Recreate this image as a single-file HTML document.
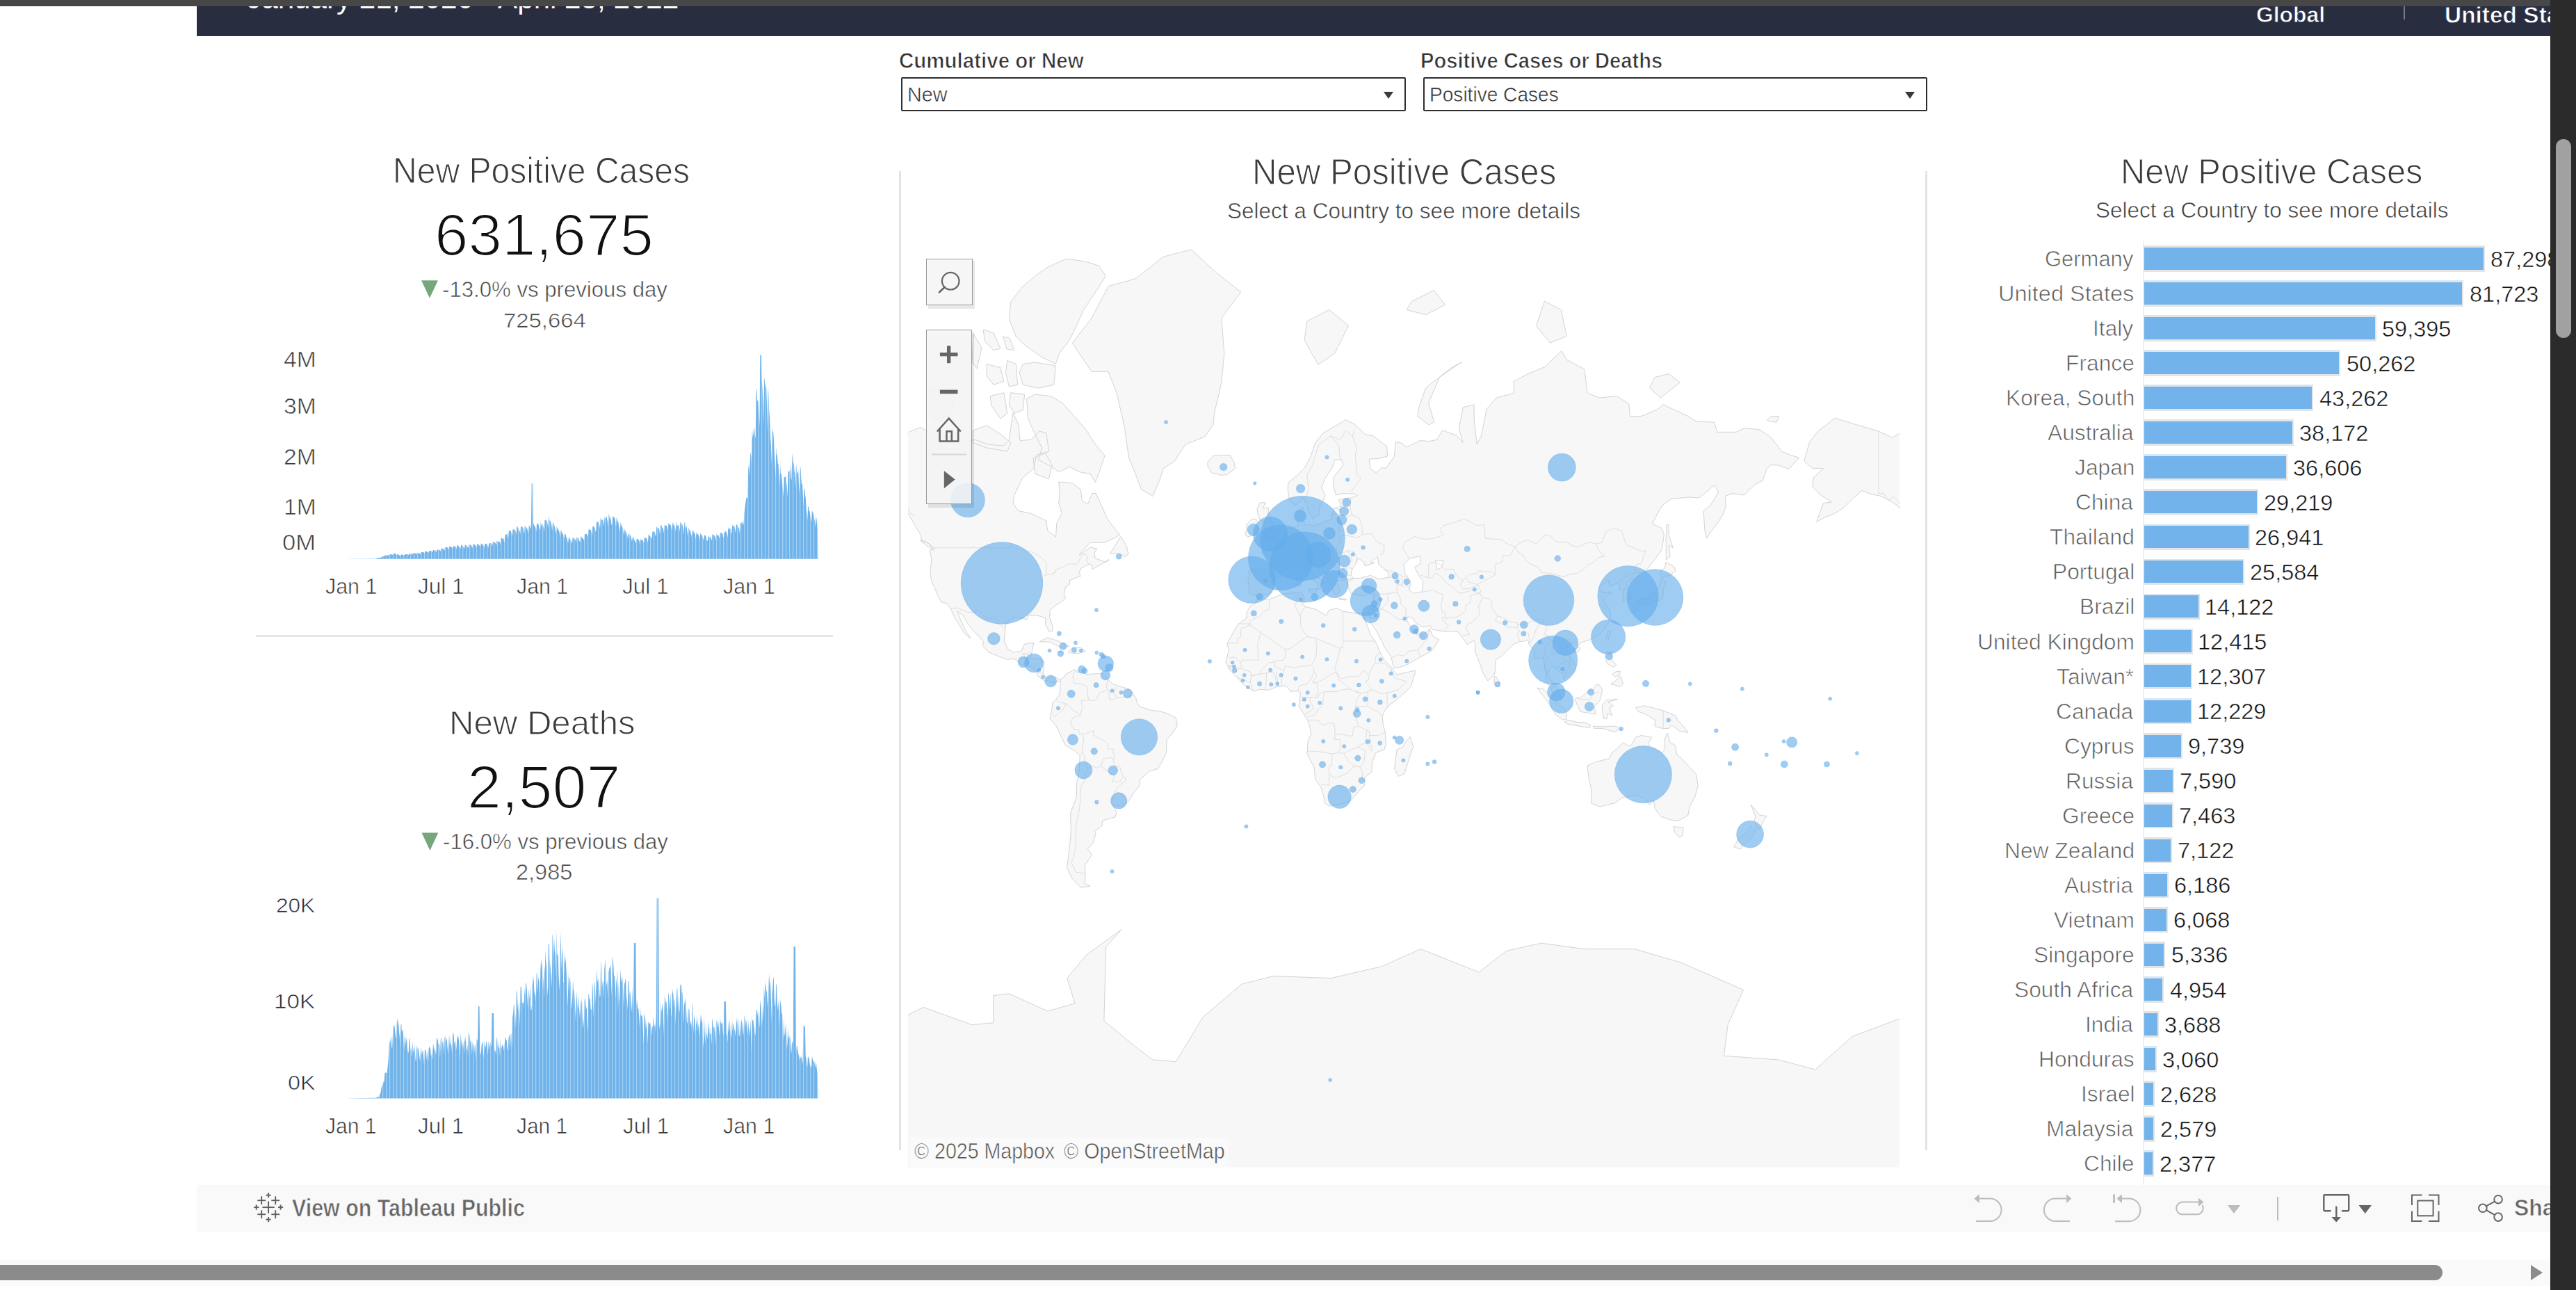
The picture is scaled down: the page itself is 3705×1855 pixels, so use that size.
<!DOCTYPE html><html><head><meta charset="utf-8"><style>
html,body{margin:0;padding:0;width:3705px;height:1855px;overflow:hidden;background:#fff;}
body{position:relative;font-family:'Liberation Sans', sans-serif;}
.t{position:absolute;white-space:nowrap;transform-origin:0 0;}
#topbar{position:absolute;z-index:5;left:0;top:0;width:3668px;height:9px;background:#474747;}
#hdr{position:absolute;left:283px;top:9px;width:3385px;height:43.4px;background:#292d40;overflow:hidden;}
#hsep{position:absolute;left:3456.7px;top:9px;width:2px;height:18.5px;background:#7a7a7a;}
#vsb{position:absolute;z-index:6;left:3668px;top:0;width:37px;height:1855px;background:#2b2b2b;}
#vth{position:absolute;left:8px;top:200px;width:22px;height:286px;border-radius:11px;background:#a1a1a1;}
#tb{position:absolute;left:283px;top:1703.5px;width:3385px;height:68px;background:#f9f9f9;}
#hsb{position:absolute;z-index:5;left:0;top:1811px;width:3668px;height:38px;background:#fafafa;}
#hth{position:absolute;left:-12px;top:8px;width:3525px;height:22px;border-radius:11px;background:#8b8b8b;}
#harr{position:absolute;left:3640px;top:8px;width:0;height:0;border-top:11px solid transparent;border-bottom:11px solid transparent;border-left:17px solid #8b8b8b;}
.dd{position:absolute;top:111.1px;width:726px;height:48.7px;border:2.2px solid #2e2e2e;border-radius:2px;box-sizing:border-box;background:#fff;}
.ddtri{position:absolute;top:132.1px;width:0;height:0;border-left:7.5px solid transparent;border-right:7.5px solid transparent;border-top:10.2px solid #3a3a3a;}
#sep1{position:absolute;left:367.7px;top:913px;width:830px;height:3px;background:#e6e6e6;}
.vl{position:absolute;top:245.8px;width:3px;height:1408px;background:#e3e3e3;}
#axisr{position:absolute;left:3081.5px;top:346.5px;width:2px;height:1357px;background:#f0f0f0;}
.bo{position:absolute;left:3082.5px;height:37.5px;background:#e4e4e4;border-top:1px solid #d4e6f5;box-sizing:border-box;}
.bf{position:absolute;left:3084px;height:32px;background:#71b3ea;}
</style></head><body><div id="topbar"></div><div id="hdr"></div><div id="hsep"></div><div id="vsb"><div id="vth"></div></div><div id="tb"></div><div id="hsb"><div id="hth"></div><div id="harr"></div></div><div class="dd" style="left:1296px"></div><div class="dd" style="left:2047px;width:725px"></div><div class="ddtri" style="left:1989.6px"></div><div class="ddtri" style="left:2739.6px"></div><div id="sep1"></div><div class="vl" style="left:1292.5px"></div><div class="vl" style="left:2769px"></div><div id="axisr"></div><svg style="position:absolute;left:0;top:0" width="1300" height="1700" viewBox="0 0 1300 1700"><defs><pattern id="stp" x="555.2" y="0" width="5.0" height="20" patternUnits="userSpaceOnUse"><rect x="0" y="0" width="5" height="20" fill="#6fb3ea"/><rect x="0" y="0" width="0.75" height="20" fill="#c9e3f8"/></pattern></defs><path d="M502.00 803.80L502.41 803.50L503.23 803.51L504.05 803.51L504.87 803.52L505.69 803.52L506.51 803.53L507.33 803.56L508.15 803.48L508.97 803.48L509.79 803.48L510.61 803.48L511.42 803.49L512.24 803.51L513.06 803.54L513.88 803.45L514.70 803.45L515.52 803.44L516.34 803.45L517.16 803.46L517.98 803.48L518.80 803.51L519.62 803.41L520.44 803.44L521.26 803.43L522.08 803.47L522.90 803.46L523.72 803.46L524.54 803.50L525.36 803.38L526.18 803.39L527.00 803.43L527.82 803.41L528.64 803.40L529.46 803.46L530.27 803.48L531.09 803.36L531.91 803.36L532.73 803.39L533.55 803.37L534.37 803.37L535.19 803.43L536.01 803.46L536.83 803.32L537.65 803.34L538.47 803.33L539.29 803.34L540.11 803.31L540.93 803.13L541.75 803.01L542.57 802.48L543.39 802.20L544.21 802.12L545.03 802.02L545.85 801.91L546.67 801.99L547.49 802.12L548.31 801.30L549.12 800.78L549.94 800.60L550.76 800.07L551.58 799.67L552.40 799.68L553.22 800.07L554.04 798.62L554.86 798.30L555.68 798.31L556.50 798.19L557.32 798.29L558.14 798.86L558.96 798.98L559.78 797.44L560.60 797.08L561.42 797.22L562.24 797.17L563.06 796.97L563.88 797.62L564.70 798.06L565.52 796.33L566.34 795.75L567.16 795.88L567.97 796.01L568.79 796.07L569.61 797.53L570.43 798.39L571.25 796.71L572.07 797.12L572.89 797.57L573.71 797.84L574.53 798.40L575.35 798.78L576.17 799.39L576.99 797.54L577.81 797.50L578.63 797.57L579.45 797.85L580.27 798.25L581.09 798.03L581.91 798.61L582.73 797.17L583.55 796.81L584.37 796.96L585.19 797.07L586.01 796.86L586.82 797.54L587.64 798.36L588.46 796.02L589.28 796.26L590.10 796.56L590.92 796.70L591.74 796.12L592.56 796.90L593.38 797.47L594.20 795.15L595.02 795.50L595.84 795.21L596.66 795.28L597.48 795.65L598.30 796.17L599.12 797.19L599.94 794.59L600.76 795.07L601.58 795.15L602.40 795.67L603.22 794.90L604.04 796.40L604.86 796.62L605.67 794.10L606.49 793.83L607.31 794.03L608.13 793.95L608.95 793.95L609.77 794.78L610.59 795.71L611.41 792.66L612.23 792.69L613.05 793.16L613.87 792.97L614.69 793.42L615.51 793.74L616.33 795.33L617.15 792.21L617.97 792.54L618.79 791.80L619.61 791.92L620.43 792.32L621.25 793.16L622.07 794.23L622.89 790.87L623.71 790.89L624.52 791.57L625.34 791.47L626.16 791.44L626.98 792.65L627.80 793.79L628.62 789.75L629.44 790.75L630.26 790.55L631.08 789.98L631.90 791.49L632.72 791.08L633.54 792.98L634.36 788.42L635.18 788.80L636.00 788.57L636.82 789.01L637.64 789.08L638.46 791.08L639.28 791.32L640.10 787.03L640.92 786.74L641.74 786.82L642.55 786.98L643.37 787.06L644.19 788.43L645.01 791.12L645.83 785.65L646.65 785.56L647.47 786.27L648.29 785.93L649.11 786.72L649.93 787.33L650.75 788.89L651.57 784.41L652.39 786.70L653.21 785.07L654.03 785.68L654.85 785.70L655.67 786.65L656.49 789.79L657.31 783.41L658.13 784.08L658.95 785.21L659.77 785.31L660.59 787.34L661.40 786.42L662.22 789.68L663.04 784.16L663.86 783.56L664.68 784.33L665.50 785.21L666.32 786.31L667.14 787.98L667.96 789.10L668.78 783.17L669.60 783.86L670.42 783.58L671.24 785.18L672.06 786.09L672.88 786.76L673.70 788.20L674.52 782.85L675.34 783.35L676.16 783.26L676.98 783.94L677.80 783.86L678.62 786.48L679.44 787.88L680.25 781.95L681.07 782.45L681.89 782.51L682.71 783.12L683.53 783.96L684.35 785.21L685.17 787.20L685.99 781.89L686.81 782.12L687.63 783.33L688.45 782.93L689.27 784.00L690.09 785.31L690.91 787.16L691.73 781.32L692.55 781.74L693.37 783.94L694.19 782.59L695.01 782.84L695.83 785.75L696.65 787.33L697.47 781.42L698.29 782.32L699.10 781.58L699.92 782.10L700.74 782.41L701.56 785.50L702.38 787.72L703.20 780.42L704.02 781.81L704.84 780.99L705.66 780.97L706.48 781.24L707.30 783.04L708.12 785.10L708.94 778.56L709.76 779.50L710.58 779.72L711.40 779.78L712.22 780.59L713.04 781.56L713.86 784.42L714.68 777.12L715.50 778.17L716.32 777.93L717.14 779.54L717.95 778.69L718.77 779.27L719.59 783.29L720.41 773.53L721.23 773.37L722.05 774.50L722.87 774.40L723.69 773.86L724.51 775.38L725.33 780.92L726.15 773.19L726.97 768.62L727.79 768.50L728.61 768.60L729.43 766.98L730.25 772.37L731.07 773.66L731.89 763.08L732.71 762.66L733.53 762.78L734.35 763.68L735.17 765.03L735.99 767.20L736.80 770.86L737.62 759.97L738.44 762.07L739.26 759.97L740.08 761.92L740.90 762.72L741.72 764.26L742.54 769.80L743.36 755.92L744.18 757.08L745.00 759.15L745.82 759.72L746.64 763.07L747.46 763.51L748.28 768.75L749.10 755.27L749.92 756.92L750.74 758.30L751.56 757.85L752.38 759.08L753.20 765.27L754.02 767.15L754.84 754.97L755.65 757.38L756.47 756.67L757.29 760.21L758.11 759.19L758.93 763.35L759.75 767.26L760.57 753.67L761.39 757.63L762.21 755.03L763.03 759.74L763.85 759.83L764.67 695.10L765.49 695.10L766.31 695.10L767.13 753.51L767.95 753.91L768.77 756.76L769.59 757.25L770.41 759.47L771.23 765.29L772.05 752.74L772.87 754.14L773.68 752.12L774.50 754.22L775.32 757.29L776.14 759.63L776.96 763.56L777.78 750.51L778.60 754.43L779.42 757.10L780.24 752.72L781.06 755.80L781.88 758.48L782.70 764.76L783.52 747.89L784.34 747.35L785.16 748.84L785.98 747.68L786.80 750.09L787.62 753.44L788.44 759.58L789.26 741.60L790.08 748.73L790.90 748.18L791.72 748.91L792.53 752.09L793.35 755.97L794.17 763.33L794.99 750.70L795.81 751.56L796.63 753.53L797.45 756.13L798.27 758.99L799.09 763.27L799.91 767.60L800.73 755.45L801.55 759.71L802.37 760.07L803.19 762.64L804.01 762.43L804.83 767.07L805.65 774.16L806.47 763.41L807.29 762.47L808.11 765.64L808.93 767.14L809.75 768.27L810.57 770.80L811.38 776.00L812.20 766.45L813.02 768.05L813.84 769.10L814.66 773.21L815.48 772.46L816.30 777.51L817.12 781.18L817.94 772.41L818.76 773.22L819.58 775.71L820.40 775.78L821.22 776.91L822.04 779.32L822.86 782.05L823.68 773.00L824.50 773.45L825.32 773.59L826.14 776.12L826.96 774.11L827.78 776.69L828.60 780.64L829.42 772.24L830.23 773.83L831.05 773.10L831.87 773.56L832.69 776.45L833.51 778.25L834.33 779.88L835.15 771.71L835.97 771.03L836.79 772.64L837.61 772.63L838.43 775.01L839.25 774.84L840.07 778.29L840.89 766.92L841.71 768.47L842.53 768.21L843.35 767.87L844.17 767.65L844.99 770.50L845.81 772.70L846.63 761.05L847.45 760.99L848.27 761.45L849.08 762.50L849.90 762.06L850.72 765.13L851.54 770.35L852.36 756.94L853.18 756.39L854.00 756.98L854.82 759.79L855.64 757.80L856.46 763.78L857.28 764.62L858.10 749.68L858.92 750.88L859.74 750.58L860.56 749.10L861.38 752.02L862.20 755.61L863.02 759.79L863.84 744.33L864.66 746.42L865.48 748.10L866.30 747.44L867.12 746.82L867.93 751.66L868.75 756.71L869.57 742.45L870.39 747.27L871.21 744.30L872.03 743.26L872.85 743.48L873.67 749.80L874.49 757.00L875.31 738.65L876.13 740.04L876.95 746.57L877.77 742.31L878.59 747.61L879.41 753.67L880.23 755.59L881.05 743.91L881.87 742.58L882.69 743.23L883.51 744.35L884.33 745.22L885.15 751.16L885.97 758.09L886.78 743.16L887.60 746.49L888.42 750.16L889.24 750.10L890.06 756.34L890.88 758.39L891.70 765.18L892.52 751.26L893.34 753.50L894.16 756.13L894.98 758.12L895.80 759.00L896.62 764.37L897.44 770.73L898.26 758.78L899.08 765.50L899.90 762.06L900.72 765.80L901.54 768.09L902.36 770.01L903.18 775.56L904.00 767.03L904.82 766.49L905.63 769.64L906.45 769.52L907.27 770.72L908.09 774.50L908.91 778.73L909.73 773.30L910.55 771.40L911.37 772.41L912.19 775.64L913.01 777.56L913.83 778.91L914.65 781.63L915.47 774.19L916.29 774.79L917.11 775.20L917.93 775.62L918.75 776.25L919.57 778.36L920.39 782.69L921.21 774.37L922.03 776.68L922.85 776.83L923.66 776.89L924.48 776.29L925.30 779.04L926.12 780.93L926.94 773.10L927.76 773.68L928.58 773.57L929.40 773.09L930.22 774.84L931.04 776.83L931.86 780.63L932.68 769.23L933.50 768.10L934.32 770.66L935.14 770.99L935.96 772.09L936.78 773.25L937.60 775.19L938.42 764.27L939.24 764.25L940.06 763.52L940.88 765.51L941.70 764.16L942.51 769.34L943.33 771.68L944.15 759.05L944.97 756.81L945.79 759.16L946.61 759.25L947.43 759.49L948.25 761.75L949.07 768.54L949.89 754.24L950.71 756.56L951.53 754.95L952.35 758.38L953.17 758.93L953.99 761.40L954.81 766.69L955.63 755.32L956.45 754.70L957.27 756.38L958.09 755.88L958.91 755.33L959.73 758.92L960.55 764.46L961.36 751.73L962.18 752.98L963.00 754.20L963.82 754.74L964.64 754.72L965.46 757.95L966.28 763.58L967.10 753.90L967.92 750.58L968.74 756.14L969.56 753.31L970.38 758.13L971.20 759.35L972.02 765.03L972.84 749.10L973.66 755.39L974.48 755.95L975.30 755.50L976.12 753.70L976.94 758.48L977.76 764.65L978.58 749.93L979.40 752.67L980.21 751.93L981.03 754.10L981.85 755.53L982.67 759.87L983.49 768.78L984.31 751.90L985.13 750.54L985.95 760.45L986.77 755.66L987.59 757.74L988.41 765.04L989.23 770.60L990.05 757.67L990.87 759.96L991.69 762.90L992.51 762.23L993.33 765.96L994.15 768.21L994.97 772.49L995.79 764.46L996.61 762.42L997.43 763.48L998.25 767.77L999.06 765.33L999.88 769.51L1000.70 775.56L1001.52 764.19L1002.34 768.65L1003.16 768.26L1003.98 766.73L1004.80 770.40L1005.62 771.54L1006.44 776.75L1007.26 766.41L1008.08 768.44L1008.90 769.44L1009.72 769.86L1010.54 772.91L1011.36 774.31L1012.18 777.32L1013.00 768.90L1013.82 770.07L1014.64 770.31L1015.46 770.94L1016.28 775.72L1017.10 777.00L1017.91 778.22L1018.73 769.51L1019.55 772.31L1020.37 773.08L1021.19 771.14L1022.01 772.45L1022.83 774.93L1023.65 777.62L1024.47 767.97L1025.29 769.03L1026.11 768.60L1026.93 769.58L1027.75 770.43L1028.57 772.25L1029.39 777.35L1030.21 767.12L1031.03 768.96L1031.85 770.10L1032.67 770.32L1033.49 768.92L1034.31 772.56L1035.13 774.87L1035.95 765.32L1036.76 766.79L1037.58 766.30L1038.40 766.63L1039.22 767.52L1040.04 771.96L1040.86 773.86L1041.68 763.89L1042.50 766.54L1043.32 762.76L1044.14 766.92L1044.96 763.24L1045.78 767.33L1046.60 773.50L1047.42 757.71L1048.24 761.98L1049.06 758.40L1049.88 761.16L1050.70 759.09L1051.52 766.80L1052.34 767.71L1053.16 754.26L1053.98 757.28L1054.79 756.00L1055.61 755.63L1056.43 757.13L1057.25 761.85L1058.07 766.77L1058.89 753.06L1059.71 754.74L1060.53 754.62L1061.35 756.95L1062.17 758.79L1062.99 759.88L1063.81 767.34L1064.63 752.81L1065.45 751.04L1066.27 750.82L1067.09 755.08L1067.91 749.35L1068.73 752.03L1069.55 755.05L1070.37 737.32L1071.19 732.37L1072.01 725.57L1072.83 718.97L1073.64 715.12L1074.46 716.68L1075.28 715.20L1076.10 674.50L1076.92 668.38L1077.74 683.67L1078.56 667.09L1079.38 650.64L1080.20 654.37L1081.02 667.38L1081.84 616.75L1082.66 629.20L1083.48 625.00L1084.30 614.63L1085.12 618.11L1085.94 626.18L1086.76 630.29L1087.58 565.47L1088.40 557.53L1089.22 577.49L1090.04 574.36L1090.86 578.94L1091.68 594.32L1092.49 614.36L1093.31 510.40L1094.13 510.40L1094.95 510.40L1095.77 547.38L1096.59 558.21L1097.41 578.83L1098.23 609.79L1099.05 542.21L1099.87 547.27L1100.69 558.58L1101.51 550.28L1102.33 561.26L1103.15 588.00L1103.97 621.21L1104.79 556.77L1105.61 568.56L1106.43 591.66L1107.25 601.53L1108.07 628.15L1108.89 640.14L1109.71 668.76L1110.53 615.61L1111.34 620.09L1112.16 621.26L1112.98 632.57L1113.80 652.10L1114.62 666.24L1115.44 690.05L1116.26 642.96L1117.08 653.81L1117.90 654.67L1118.72 666.80L1119.54 666.90L1120.36 683.83L1121.18 699.66L1122.00 665.63L1122.82 681.58L1123.64 680.24L1124.46 687.74L1125.28 696.80L1126.10 706.01L1126.92 714.85L1127.74 685.70L1128.56 686.07L1129.38 686.02L1130.19 684.14L1131.01 694.42L1131.83 699.56L1132.65 715.11L1133.47 677.15L1134.29 678.81L1135.11 676.14L1135.93 679.64L1136.75 668.83L1137.57 687.68L1138.39 690.33L1139.21 660.86L1140.03 650.63L1140.85 670.76L1141.67 662.69L1142.49 676.87L1143.31 683.08L1144.13 702.03L1144.95 666.96L1145.77 672.33L1146.59 679.95L1147.41 679.88L1148.23 677.61L1149.04 697.92L1149.86 709.35L1150.68 670.61L1151.50 672.69L1152.32 687.17L1153.14 695.92L1153.96 695.91L1154.78 711.29L1155.60 727.92L1156.42 702.65L1157.24 703.11L1158.06 712.39L1158.88 716.00L1159.70 732.52L1160.52 739.27L1161.34 747.55L1162.16 727.69L1162.98 729.08L1163.80 734.86L1164.62 735.20L1165.44 741.46L1166.26 746.13L1167.08 750.23L1167.89 733.90L1168.71 735.93L1169.53 737.66L1170.35 740.78L1171.17 745.56L1171.99 749.30L1172.81 758.17L1173.63 741.94L1174.45 746.32L1175.27 753.78L1176.09 759.72L1176.50 803.80Z" fill="url(#stp)"/><path d="M501.30 1579.40L501.71 1579.39L502.53 1579.37L503.35 1579.36L504.17 1579.35L504.99 1579.34L505.81 1579.32L506.63 1579.31L507.45 1579.27L508.27 1579.25L509.09 1579.24L509.91 1579.23L510.73 1579.21L511.55 1579.21L512.37 1579.23L513.19 1579.14L514.01 1579.11L514.83 1579.12L515.66 1579.11L516.48 1579.08L517.30 1579.12L518.12 1579.14L518.94 1579.00L519.76 1578.99L520.58 1578.99L521.40 1579.01L522.22 1578.99L523.04 1579.07L523.86 1579.08L524.68 1578.96L525.50 1578.94L526.32 1578.89L527.14 1578.84L527.96 1578.90L528.78 1578.91L529.60 1578.92L530.42 1578.74L531.24 1578.73L532.06 1578.78L532.88 1578.80L533.70 1578.74L534.52 1578.77L535.34 1578.93L536.16 1578.66L536.98 1578.68L537.80 1578.64L538.62 1578.67L539.44 1578.61L540.26 1578.70L541.08 1578.68L541.90 1578.11L542.72 1577.91L543.55 1577.81L544.37 1577.36L545.19 1576.93L546.01 1574.24L546.83 1573.28L547.65 1570.24L548.47 1564.67L549.29 1562.10L550.11 1560.41L550.93 1557.44L551.75 1555.31L552.57 1555.51L553.39 1543.27L554.21 1542.84L555.03 1542.29L555.85 1542.33L556.67 1543.68L557.49 1534.86L558.31 1528.66L559.13 1515.05L559.95 1495.97L560.77 1500.32L561.59 1495.74L562.41 1489.82L563.23 1505.22L564.05 1508.14L564.87 1490.02L565.69 1473.45L566.51 1475.37L567.33 1474.92L568.15 1481.03L568.97 1490.94L569.79 1493.21L570.61 1470.43L571.43 1463.57L572.26 1474.78L573.08 1467.29L573.90 1482.90L574.72 1489.60L575.54 1507.24L576.36 1474.09L577.18 1471.86L578.00 1483.88L578.82 1480.78L579.64 1482.84L580.46 1496.65L581.28 1510.15L582.10 1487.43L582.92 1492.62L583.74 1503.09L584.56 1492.23L585.38 1495.93L586.20 1508.08L587.02 1514.97L587.84 1511.42L588.66 1491.86L589.48 1495.53L590.30 1511.17L591.12 1505.57L591.94 1512.34L592.76 1521.12L593.58 1496.13L594.40 1513.91L595.22 1506.78L596.04 1503.11L596.86 1512.61L597.68 1524.67L598.50 1526.17L599.32 1501.96L600.15 1509.50L600.97 1505.29L601.79 1507.92L602.61 1513.95L603.43 1520.26L604.25 1526.58L605.07 1507.14L605.89 1508.56L606.71 1516.74L607.53 1512.15L608.35 1509.84L609.17 1520.21L609.99 1531.25L610.81 1510.17L611.63 1509.56L612.45 1510.25L613.27 1524.56L614.09 1510.34L614.91 1519.24L615.73 1528.53L616.55 1508.86L617.37 1504.40L618.19 1506.68L619.01 1507.20L619.83 1517.89L620.65 1515.88L621.47 1524.48L622.29 1511.97L623.11 1499.68L623.93 1507.79L624.75 1511.24L625.57 1503.60L626.39 1513.24L627.21 1517.69L628.04 1490.71L628.86 1494.51L629.68 1494.97L630.50 1500.82L631.32 1501.36L632.14 1503.12L632.96 1521.53L633.78 1495.27L634.60 1490.60L635.42 1511.03L636.24 1499.03L637.06 1495.64L637.88 1502.77L638.70 1517.02L639.52 1491.91L640.34 1488.82L641.16 1498.22L641.98 1492.85L642.80 1494.76L643.62 1506.65L644.44 1516.35L645.26 1488.24L646.08 1505.05L646.90 1487.38L647.72 1500.53L648.54 1500.70L649.36 1504.34L650.18 1515.44L651.00 1490.42L651.82 1483.98L652.64 1487.45L653.46 1502.53L654.28 1496.45L655.10 1499.59L655.92 1511.51L656.75 1503.42L657.57 1486.87L658.39 1494.59L659.21 1489.51L660.03 1496.75L660.85 1502.72L661.67 1522.94L662.49 1484.45L663.31 1496.03L664.13 1501.14L664.95 1507.19L665.77 1495.34L666.59 1503.43L667.41 1515.28L668.23 1491.99L669.05 1498.75L669.87 1490.08L670.69 1506.21L671.51 1510.25L672.33 1501.73L673.15 1518.75L673.97 1485.40L674.79 1486.89L675.61 1490.68L676.43 1497.66L677.25 1496.14L678.07 1502.72L678.89 1517.40L679.71 1497.92L680.53 1501.51L681.35 1502.68L682.17 1514.09L682.99 1500.81L683.81 1505.81L684.64 1525.38L685.46 1493.94L686.28 1494.88L687.10 1497.18L687.92 1447.00L688.74 1447.00L689.56 1447.00L690.38 1515.27L691.20 1516.61L692.02 1510.79L692.84 1500.86L693.66 1497.79L694.48 1501.32L695.30 1521.89L696.12 1512.56L696.94 1495.64L697.76 1502.49L698.58 1506.93L699.40 1498.45L700.22 1496.14L701.04 1503.97L701.86 1518.03L702.68 1496.51L703.50 1502.00L704.32 1508.80L705.14 1496.65L705.96 1502.34L706.78 1503.89L707.60 1457.00L708.42 1457.00L709.24 1457.00L710.06 1457.00L710.88 1505.33L711.70 1512.58L712.53 1509.91L713.35 1517.53L714.17 1495.86L714.99 1490.59L715.81 1505.76L716.63 1497.84L717.45 1507.51L718.27 1506.01L719.09 1519.62L719.91 1493.18L720.73 1503.28L721.55 1507.18L722.37 1503.00L723.19 1502.02L724.01 1505.01L724.83 1511.44L725.65 1501.57L726.47 1495.02L727.29 1490.22L728.11 1495.88L728.93 1496.44L729.75 1509.79L730.57 1510.16L731.39 1493.81L732.21 1488.10L733.03 1489.74L733.85 1510.77L734.67 1486.74L735.49 1486.24L736.31 1506.96L737.13 1463.33L737.95 1457.61L738.77 1447.05L739.59 1443.54L740.42 1480.29L741.24 1456.04L742.06 1478.90L742.88 1423.21L743.70 1427.67L744.52 1444.05L745.34 1457.92L746.16 1439.86L746.98 1450.36L747.80 1475.69L748.62 1419.08L749.44 1418.46L750.26 1427.37L751.08 1442.60L751.90 1441.66L752.72 1439.96L753.54 1449.15L754.36 1421.33L755.18 1433.00L756.00 1415.48L756.82 1412.57L757.64 1421.24L758.46 1435.07L759.28 1451.39L760.10 1422.43L760.92 1425.88L761.74 1437.30L762.56 1415.54L763.38 1451.26L764.20 1453.14L765.02 1444.24L765.84 1401.73L766.66 1416.26L767.48 1403.63L768.30 1424.08L769.13 1428.86L769.95 1430.91L770.77 1439.93L771.59 1401.25L772.41 1397.60L773.23 1427.71L774.05 1403.40L774.87 1410.06L775.69 1410.47L776.51 1431.48L777.33 1396.88L778.15 1377.60L778.97 1392.82L779.79 1379.65L780.61 1422.81L781.43 1401.22L782.25 1436.08L783.07 1398.23L783.89 1389.37L784.71 1366.04L785.53 1391.14L786.35 1381.06L787.17 1421.65L787.99 1432.70L788.81 1357.05L789.63 1357.33L790.45 1380.49L791.27 1387.03L792.09 1395.24L792.91 1405.02L793.73 1420.42L794.55 1342.53L795.37 1348.64L796.19 1373.18L797.02 1349.40L797.84 1366.33L798.66 1372.28L799.48 1404.27L800.30 1335.63L801.12 1366.04L801.94 1375.36L802.76 1371.32L803.58 1403.69L804.40 1423.98L805.22 1403.51L806.04 1340.59L806.86 1358.34L807.68 1394.47L808.50 1361.45L809.32 1369.35L810.14 1413.11L810.96 1412.75L811.78 1366.60L812.60 1386.02L813.42 1376.15L814.24 1390.55L815.06 1404.26L815.88 1428.62L816.70 1447.34L817.52 1398.01L818.34 1428.27L819.16 1404.33L819.98 1407.91L820.80 1413.83L821.62 1442.27L822.44 1451.46L823.26 1431.96L824.08 1408.92L824.91 1425.59L825.73 1423.23L826.55 1435.39L827.37 1453.37L828.19 1469.85L829.01 1424.59L829.83 1437.31L830.65 1451.41L831.47 1429.60L832.29 1446.27L833.11 1450.96L833.93 1463.63L834.75 1437.03L835.57 1461.08L836.39 1434.53L837.21 1443.41L838.03 1481.82L838.85 1462.39L839.67 1476.89L840.49 1438.20L841.31 1435.02L842.13 1440.36L842.95 1451.62L843.77 1446.87L844.59 1471.94L845.41 1485.78L846.23 1430.45L847.05 1429.65L847.87 1438.65L848.69 1434.48L849.51 1450.94L850.33 1451.44L851.15 1452.99L851.97 1411.52L852.79 1422.93L853.62 1464.52L854.44 1417.62L855.26 1409.80L856.08 1423.59L856.90 1442.39L857.72 1410.59L858.54 1393.39L859.36 1412.55L860.18 1409.22L861.00 1408.10L861.82 1422.50L862.64 1434.29L863.46 1431.49L864.28 1380.45L865.10 1396.59L865.92 1421.41L866.74 1411.14L867.56 1411.42L868.38 1438.41L869.20 1393.96L870.02 1384.97L870.84 1377.48L871.66 1409.02L872.48 1417.89L873.30 1408.63L874.12 1435.78L874.94 1398.37L875.76 1395.82L876.58 1390.93L877.40 1391.65L878.22 1385.50L879.04 1410.37L879.86 1432.79L880.68 1374.99L881.51 1379.18L882.33 1388.18L883.15 1402.98L883.97 1403.80L884.79 1417.20L885.61 1436.65L886.43 1405.72L887.25 1416.89L888.07 1391.63L888.89 1456.90L889.71 1413.16L890.53 1431.81L891.35 1443.34L892.17 1392.49L892.99 1408.96L893.81 1412.45L894.63 1402.89L895.45 1408.54L896.27 1423.24L897.09 1449.79L897.91 1413.81L898.73 1413.98L899.55 1406.90L900.37 1412.84L901.19 1431.62L902.01 1438.41L902.83 1452.68L903.65 1411.98L904.47 1409.86L905.29 1430.71L906.11 1424.10L906.93 1432.25L907.75 1445.96L908.57 1455.66L909.40 1418.71L910.22 1458.80L911.04 1440.08L911.86 1356.00L912.68 1356.00L913.50 1356.00L914.32 1356.00L915.14 1447.48L915.96 1436.36L916.78 1445.20L917.60 1450.94L918.42 1450.26L919.24 1463.15L920.06 1478.61L920.88 1447.77L921.70 1460.13L922.52 1460.79L923.34 1458.49L924.16 1465.06L924.98 1483.65L925.80 1503.57L926.62 1462.69L927.44 1457.09L928.26 1467.48L929.08 1481.05L929.90 1467.76L930.72 1477.77L931.54 1501.53L932.36 1471.16L933.18 1468.55L934.00 1473.61L934.82 1471.01L935.64 1472.09L936.46 1478.64L937.28 1489.49L938.11 1477.06L938.93 1475.77L939.75 1461.19L940.57 1475.00L941.39 1476.06L942.21 1471.32L943.03 1484.65L943.85 1455.88L944.67 1291.20L945.49 1291.20L946.31 1291.20L947.13 1291.20L947.95 1471.21L948.77 1480.32L949.59 1467.57L950.41 1438.27L951.23 1454.46L952.05 1448.72L952.87 1442.83L953.69 1457.31L954.51 1490.43L955.33 1429.84L956.15 1451.75L956.97 1432.31L957.79 1441.76L958.61 1440.50L959.43 1455.80L960.25 1469.97L961.07 1426.88L961.89 1430.83L962.71 1453.77L963.53 1436.50L964.35 1428.35L965.17 1459.26L966.00 1461.14L966.82 1420.67L967.64 1427.24L968.46 1429.32L969.28 1450.39L970.10 1435.74L970.92 1439.21L971.74 1473.63L972.56 1439.70L973.38 1423.09L974.20 1420.31L975.02 1449.90L975.84 1429.83L976.66 1450.70L977.48 1456.52L978.30 1418.01L979.12 1415.11L979.94 1416.99L980.76 1427.35L981.58 1427.70L982.40 1447.52L983.22 1474.30L984.04 1437.97L984.86 1445.55L985.68 1433.51L986.50 1439.95L987.32 1459.76L988.14 1471.97L988.96 1469.84L989.78 1453.07L990.60 1450.28L991.42 1450.94L992.24 1466.41L993.06 1473.98L993.89 1467.48L994.71 1479.87L995.53 1441.77L996.35 1445.50L997.17 1484.97L997.99 1466.64L998.81 1458.93L999.63 1469.52L1000.45 1488.43L1001.27 1467.11L1002.09 1473.98L1002.91 1458.44L1003.73 1482.48L1004.55 1471.57L1005.37 1477.91L1006.19 1490.37L1007.01 1473.92L1007.83 1458.34L1008.65 1463.57L1009.47 1468.18L1010.29 1471.07L1011.11 1497.11L1011.93 1507.48L1012.75 1460.80L1013.57 1484.49L1014.39 1500.29L1015.21 1468.84L1016.03 1484.64L1016.85 1489.24L1017.67 1493.78L1018.49 1467.75L1019.31 1477.84L1020.13 1487.97L1020.95 1474.64L1021.78 1488.07L1022.60 1485.53L1023.42 1503.37L1024.24 1463.52L1025.06 1468.98L1025.88 1479.03L1026.70 1475.37L1027.52 1477.92L1028.34 1487.47L1029.16 1503.49L1029.98 1464.85L1030.80 1470.63L1031.62 1467.02L1032.44 1477.76L1033.26 1468.96L1034.08 1479.93L1034.90 1490.52L1035.72 1462.87L1036.54 1469.15L1037.36 1472.21L1038.18 1471.47L1039.00 1468.20L1039.82 1484.70L1040.64 1490.59L1041.46 1440.00L1042.28 1440.00L1043.10 1440.00L1043.92 1440.00L1044.74 1488.36L1045.56 1486.34L1046.38 1499.77L1047.20 1467.96L1048.02 1483.80L1048.84 1480.99L1049.66 1465.38L1050.49 1480.57L1051.31 1492.85L1052.13 1488.20L1052.95 1466.11L1053.77 1483.20L1054.59 1471.06L1055.41 1473.25L1056.23 1479.80L1057.05 1482.25L1057.87 1490.71L1058.69 1477.33L1059.51 1463.02L1060.33 1477.79L1061.15 1463.52L1061.97 1470.09L1062.79 1489.95L1063.61 1489.00L1064.43 1465.95L1065.25 1489.61L1066.07 1466.38L1066.89 1468.44L1067.71 1473.47L1068.53 1484.01L1069.35 1489.27L1070.17 1463.36L1070.99 1458.86L1071.81 1479.10L1072.63 1465.94L1073.45 1468.19L1074.27 1477.73L1075.09 1489.50L1075.91 1464.65L1076.73 1476.32L1077.55 1481.68L1078.38 1491.86L1079.20 1466.59L1080.02 1484.44L1080.84 1514.73L1081.66 1462.53L1082.48 1467.73L1083.30 1466.97L1084.12 1472.90L1084.94 1479.42L1085.76 1488.26L1086.58 1487.70L1087.40 1459.32L1088.22 1451.46L1089.04 1452.39L1089.86 1461.51L1090.68 1452.24L1091.50 1470.31L1092.32 1477.72L1093.14 1446.18L1093.96 1437.59L1094.78 1451.56L1095.60 1475.90L1096.42 1466.55L1097.24 1442.75L1098.06 1464.10L1098.88 1418.44L1099.70 1435.39L1100.52 1411.39L1101.34 1415.64L1102.16 1423.12L1102.98 1427.65L1103.80 1448.57L1104.62 1436.58L1105.44 1411.47L1106.27 1399.96L1107.09 1417.48L1107.91 1409.32L1108.73 1431.20L1109.55 1472.84L1110.37 1409.52L1111.19 1429.77L1112.01 1404.95L1112.83 1407.64L1113.65 1435.14L1114.47 1445.72L1115.29 1447.11L1116.11 1415.28L1116.93 1415.68L1117.75 1434.90L1118.57 1453.35L1119.39 1438.58L1120.21 1455.54L1121.03 1477.94L1121.85 1435.09L1122.67 1442.33L1123.49 1446.86L1124.31 1457.07L1125.13 1458.15L1125.95 1480.15L1126.77 1497.31L1127.59 1460.41L1128.41 1489.90L1129.23 1486.03L1130.05 1471.97L1130.87 1476.14L1131.69 1509.09L1132.51 1500.84L1133.33 1477.88L1134.15 1490.67L1134.98 1494.49L1135.80 1488.45L1136.62 1493.52L1137.44 1507.62L1138.26 1515.22L1139.08 1496.52L1139.90 1500.99L1140.72 1498.79L1141.54 1361.30L1142.36 1361.30L1143.18 1361.30L1144.00 1361.30L1144.82 1512.63L1145.64 1504.32L1146.46 1503.28L1147.28 1509.16L1148.10 1514.27L1148.92 1518.52L1149.74 1525.18L1150.56 1516.07L1151.38 1520.19L1152.20 1522.25L1153.02 1518.71L1153.84 1530.95L1154.66 1524.26L1155.48 1475.60L1156.30 1475.60L1157.12 1475.60L1157.94 1475.60L1158.76 1519.34L1159.58 1522.45L1160.40 1534.53L1161.22 1532.65L1162.04 1517.43L1162.87 1522.24L1163.69 1519.97L1164.51 1527.98L1165.33 1534.71L1166.15 1531.55L1166.97 1536.78L1167.79 1518.91L1168.61 1521.97L1169.43 1526.70L1170.25 1524.17L1171.07 1526.47L1171.89 1530.80L1172.71 1535.32L1173.53 1526.15L1174.35 1532.16L1175.17 1541.09L1175.99 1543.31L1176.40 1579.40Z" fill="url(#stp)"/></svg><svg style="position:absolute;left:0;top:0" width="2800" height="1700" viewBox="0 0 2800 1700"><defs><clipPath id="mc"><rect x="1306" y="330" width="1426" height="1348.5"/></clipPath></defs><g clip-path="url(#mc)"><path d="M1165.2 663.1L1173.1 635.7L1185.0 620.2L1209.6 601.1L1228.7 607.2L1256.5 615.5L1272.4 620.2L1292.2 629.1L1304.2 622.4L1324.0 614.4L1339.9 623.6L1363.7 628.0L1379.6 635.7L1403.4 632.4L1419.3 638.9L1443.1 641.0L1451.1 633.5L1457.0 593.6L1465.0 610.8L1467.0 633.5L1482.9 632.4L1494.8 620.2L1504.7 622.4L1508.7 649.2L1490.8 654.3L1486.8 673.4L1470.9 686.9L1459.0 711.9L1457.0 723.5L1465.0 734.7L1482.9 738.3L1504.7 748.9L1506.7 763.1L1518.6 772.2L1519.8 752.4L1527.3 738.3L1522.6 722.8L1524.5 709.5L1522.6 693.0L1542.4 694.7L1554.3 703.8L1556.3 719.7L1564.3 725.1L1571.0 709.5L1576.2 709.5L1586.1 731.0L1592.1 745.4L1606.0 763.7L1610.7 768.9L1602.0 774.1L1588.1 780.3L1568.2 780.3L1558.3 790.7L1552.3 798.4L1568.2 787.1L1577.4 788.9L1574.2 794.9L1575.0 802.5L1579.0 804.2L1590.1 808.2L1594.0 804.2L1594.8 805.9L1580.1 813.2L1571.0 818.8L1570.2 812.7L1566.2 811.0L1554.3 817.7L1551.9 824.2L1554.3 828.5L1548.4 830.6L1538.4 834.8L1538.4 840.5L1532.5 844.1L1530.5 853.2L1532.5 860.5L1526.5 865.4L1518.6 870.2L1510.6 877.3L1509.5 886.5L1513.8 900.1L1514.2 907.2L1508.7 908.0L1503.5 897.9L1503.9 888.8L1496.8 886.5L1490.8 884.7L1478.9 885.2L1476.9 891.1L1469.0 888.8L1459.0 888.4L1447.1 896.5L1445.5 905.4L1444.3 921.9L1449.1 932.5L1457.0 938.0L1469.0 936.3L1473.3 926.2L1486.8 924.1L1484.8 934.6L1482.1 947.1L1494.8 947.1L1501.9 951.2L1500.7 963.5L1500.7 969.6L1506.7 975.6L1516.6 973.2L1524.5 977.2L1525.3 979.6L1520.6 979.6L1514.6 982.4L1508.7 979.6L1500.7 978.0L1492.0 971.6L1491.6 966.7L1484.4 959.4L1469.4 955.8L1459.0 947.1L1449.1 948.4L1435.2 943.4L1421.3 937.6L1413.4 928.3L1414.6 923.2L1409.4 916.8L1399.5 906.7L1391.5 896.1L1384.4 884.2L1376.8 878.7L1381.6 891.1L1387.5 904.5L1395.9 918.1L1387.2 911.1L1379.6 897.9L1373.6 888.8L1367.3 874.9L1361.7 867.8L1353.4 865.4L1348.2 855.1L1345.9 849.2L1339.9 835.9L1337.9 823.1L1339.9 804.2L1337.1 791.3L1343.9 788.9L1335.9 781.6L1326.0 776.6L1324.0 768.9L1314.1 752.4L1308.1 741.9L1300.2 727.3L1288.3 719.7L1276.4 713.5L1260.5 710.3L1248.6 705.5L1236.7 715.8L1228.7 723.5L1220.8 731.0L1208.9 738.3L1196.9 743.3L1183.0 750.3L1193.0 723.5L1204.9 722.0L1189.0 711.9L1177.1 699.7L1178.7 686.9L1193.0 673.4L1177.1 673.4ZM2594.7 663.1L2602.7 635.7L2614.6 620.2L2639.2 601.1L2658.3 607.2L2686.1 615.5L2701.9 620.2L2721.8 629.1L2733.7 622.4L2753.6 614.4L2769.5 623.6L2793.3 628.0L2809.2 635.7L2833.0 632.4L2848.9 638.9L2872.7 641.0L2880.6 633.5L2886.6 593.6L2894.5 610.8L2896.5 633.5L2912.4 632.4L2924.3 620.2L2934.3 622.4L2938.2 649.2L2920.4 654.3L2916.4 673.4L2900.5 686.9L2888.6 711.9L2886.6 723.5L2894.5 734.7L2912.4 738.3L2934.3 748.9L2936.2 763.1L2948.2 772.2L2949.3 752.4L2956.9 738.3L2952.1 722.8L2954.1 709.5L2952.1 693.0L2972.0 694.7L2983.9 703.8L2985.9 719.7L2993.8 725.1L3000.6 709.5L3005.7 709.5L3015.7 731.0L3021.6 745.4L3035.5 763.7L3040.3 768.9L3031.5 774.1L3017.6 780.3L2997.8 780.3L2987.9 790.7L2981.9 798.4L2997.8 787.1L3006.9 788.9L3003.7 794.9L3004.5 802.5L3008.5 804.2L3019.6 808.2L3023.6 804.2L3024.4 805.9L3009.7 813.2L3000.6 818.8L2999.8 812.7L2995.8 811.0L2983.9 817.7L2981.5 824.2L2983.9 828.5L2977.9 830.6L2968.0 834.8L2968.0 840.5L2962.0 844.1L2960.1 853.2L2962.0 860.5L2956.1 865.4L2948.2 870.2L2940.2 877.3L2939.0 886.5L2943.4 900.1L2943.8 907.2L2938.2 908.0L2933.1 897.9L2933.5 888.8L2926.3 886.5L2920.4 884.7L2908.4 885.2L2906.5 891.1L2898.5 888.8L2888.6 888.4L2876.7 896.5L2875.1 905.4L2873.9 921.9L2878.7 932.5L2886.6 938.0L2898.5 936.3L2902.9 926.2L2916.4 924.1L2914.4 934.6L2911.6 947.1L2924.3 947.1L2931.5 951.2L2930.3 963.5L2930.3 969.6L2936.2 975.6L2946.2 973.2L2954.1 977.2L2954.9 979.6L2950.1 979.6L2944.2 982.4L2938.2 979.6L2930.3 978.0L2921.5 971.6L2921.1 966.7L2914.0 959.4L2898.9 955.8L2888.6 947.1L2878.7 948.4L2864.8 943.4L2850.9 937.6L2842.9 928.3L2844.1 923.2L2838.9 916.8L2829.0 906.7L2821.1 896.1L2813.9 884.2L2806.4 878.7L2811.2 891.1L2817.1 904.5L2825.4 918.1L2816.7 911.1L2809.2 897.9L2803.2 888.8L2796.9 874.9L2791.3 867.8L2783.0 865.4L2777.8 855.1L2775.4 849.2L2769.5 835.9L2767.5 823.1L2769.5 804.2L2766.7 791.3L2773.4 788.9L2765.5 781.6L2755.6 776.6L2753.6 768.9L2743.6 752.4L2737.7 741.9L2729.7 727.3L2717.8 719.7L2705.9 713.5L2690.0 710.3L2678.1 705.5L2666.2 715.8L2658.3 723.5L2650.3 731.0L2638.4 738.3L2626.5 743.3L2612.6 750.3L2622.5 723.5L2634.4 722.0L2618.6 711.9L2606.6 699.7L2608.2 686.9L2622.5 673.4L2606.6 673.4ZM1335.9 593.6L1343.9 603.6L1365.7 598.6L1373.6 572.2L1357.8 560.7L1337.9 560.7ZM2765.5 593.6L2773.4 603.6L2795.3 598.6L2803.2 572.2L2787.3 560.7L2767.5 560.7ZM1658.0 713.5L1641.7 703.8L1631.8 678.0L1623.8 659.2L1619.9 633.5L1617.9 616.7L1613.9 598.6L1606.0 565.1L1594.0 534.4L1570.2 534.4L1558.3 517.3L1542.4 493.2L1570.2 457.3L1594.0 411.9L1633.8 400.5L1673.5 369.2L1713.2 358.9L1748.9 391.6L1784.6 420.1L1756.9 457.3L1760.8 508.3L1756.9 550.2L1746.9 592.3L1744.9 610.8L1733.0 628.0L1705.2 638.9L1689.3 663.1L1673.5 673.4L1667.5 691.2ZM1737.0 664.0L1744.9 655.3L1768.8 654.3L1774.7 664.0L1776.7 673.4L1764.8 682.5L1756.9 683.4L1743.0 679.8L1737.0 670.7ZM1525.3 977.2L1530.5 973.6L1532.5 969.6L1538.4 966.7L1546.4 962.3L1550.4 967.6L1554.3 963.5L1562.3 969.6L1570.2 969.2L1578.2 968.8L1586.1 968.8L1590.1 973.6L1594.0 977.6L1602.0 984.4L1613.9 988.0L1625.8 991.6L1633.8 1004.4L1635.7 1011.5L1639.7 1016.3L1655.6 1021.4L1669.5 1023.0L1679.4 1026.2L1691.3 1032.2L1693.3 1043.4L1685.4 1055.4L1678.2 1063.6L1677.4 1082.1L1671.5 1094.7L1665.5 1105.4L1653.6 1108.8L1639.7 1120.7L1638.5 1130.1L1629.8 1141.1L1621.8 1153.8L1613.9 1159.5L1600.0 1157.6L1606.0 1167.4L1604.0 1174.8L1586.1 1179.9L1584.9 1187.7L1574.2 1195.6L1576.2 1198.3L1572.2 1212.0L1564.3 1220.5L1570.2 1229.3L1560.3 1244.5L1561.1 1256.0L1560.3 1270.6L1568.2 1274.1L1554.3 1276.2L1542.4 1263.9L1534.5 1247.7L1538.4 1217.7L1540.4 1195.6L1539.6 1169.8L1548.4 1145.7L1548.4 1127.4L1552.3 1107.5L1553.1 1086.3L1546.4 1080.0L1532.5 1071.8L1526.5 1059.5L1518.6 1043.4L1509.9 1033.4L1512.6 1021.4L1514.2 1009.5L1518.6 1005.5L1522.6 1000.8L1524.5 995.6L1525.3 983.6ZM1809.3 859.1L1824.4 862.5L1844.2 854.2L1872.0 851.7L1876.0 860.5L1873.2 868.8L1878.0 872.6L1891.9 875.9L1907.7 885.2L1911.7 877.3L1923.6 874.4L1931.6 879.1L1949.4 881.9L1959.4 881.0L1968.1 880.5L1970.9 888.8L1961.8 887.0L1971.3 913.3L1980.0 926.2L1985.2 938.8L1991.1 949.2L2001.1 959.4L2004.2 964.3L2009.0 970.0L2035.6 964.3L2034.8 969.6L2028.9 987.6L2020.9 995.6L2007.0 1007.5L1999.1 1013.5L1991.9 1021.4L1988.0 1030.2L1989.2 1041.4L1992.3 1053.4L1993.5 1069.7L1991.1 1077.9L1979.2 1082.1L1973.3 1096.8L1973.3 1109.7L1963.3 1117.6L1962.5 1129.6L1955.4 1136.5L1943.5 1150.4L1933.6 1155.2L1911.7 1159.1L1905.4 1155.2L1903.8 1145.7L1899.8 1131.9L1891.9 1120.7L1889.9 1103.2L1880.0 1084.2L1881.1 1065.6L1885.9 1055.4L1883.9 1045.4L1880.7 1035.4L1868.0 1015.5L1870.0 1001.6L1870.4 995.6L1866.1 993.6L1856.1 994.4L1850.2 986.4L1836.3 987.6L1824.4 992.4L1812.4 991.2L1802.5 994.0L1788.6 984.4L1778.7 973.6L1770.7 965.5L1765.6 957.4L1762.8 952.5L1767.6 934.6L1764.8 926.2L1772.7 911.1L1780.7 897.9L1792.6 888.8L1793.4 879.6L1798.5 871.1L1805.3 867.8ZM2028.1 1059.5L2032.8 1073.8L2030.1 1080.0L2024.9 1096.8L2019.7 1113.2L2011.0 1116.3L2005.8 1105.4L2007.0 1092.6L2009.0 1077.9L2017.0 1074.6L2022.9 1065.6ZM1810.1 858.1L1796.6 853.2L1797.0 845.1L1794.6 835.3L1797.4 827.4L1795.4 822.0L1800.5 818.2L1825.2 819.8L1827.1 813.8L1827.5 805.3L1823.6 799.0L1814.4 794.3L1819.6 788.9L1825.9 790.1L1824.8 783.4L1832.3 785.3L1838.7 776.0L1845.0 773.4L1850.2 765.7L1852.2 760.4L1860.1 759.1L1866.5 756.4L1866.1 745.4L1864.9 736.2L1874.0 729.6L1873.2 738.3L1876.0 750.3L1875.6 755.7L1883.9 753.7L1889.9 756.4L1905.8 750.3L1915.7 746.1L1916.1 738.3L1919.7 730.3L1928.8 733.2L1927.6 724.3L1925.6 718.2L1943.5 715.8L1952.2 712.7L1947.5 710.3L1931.6 709.5L1921.6 711.9L1917.7 699.7L1917.7 686.9L1931.6 668.8L1929.6 661.2L1919.7 661.2L1915.7 673.4L1905.8 687.8L1900.6 701.4L1906.2 712.7L1897.8 729.6L1897.4 739.8L1887.9 746.1L1883.1 738.3L1879.2 725.1L1874.0 715.8L1864.1 726.6L1854.5 720.5L1852.2 703.8L1852.9 693.8L1864.1 685.2L1876.0 673.4L1883.9 659.2L1891.9 636.7L1903.8 622.4L1919.7 613.2L1935.5 603.6L1947.5 609.6L1955.4 616.7L1963.3 624.7L1975.3 626.9L1994.7 642.0L1995.5 656.3L1983.2 659.2L1969.3 660.2L1970.5 673.4L1979.2 679.8L1987.2 672.5L1993.1 673.4L2005.0 657.2L2007.8 635.7L2015.0 636.7L2022.9 643.1L2042.8 633.5L2054.7 634.6L2066.6 632.4L2074.5 619.0L2094.4 625.8L2104.3 636.7L2098.4 616.7L2104.3 585.8L2120.2 581.8L2120.2 604.8L2124.2 638.9L2130.1 628.0L2138.1 588.4L2152.0 572.2L2177.8 565.1L2177.0 548.7L2197.6 537.6L2221.5 527.7L2246.1 504.6L2253.2 517.3L2279.0 531.1L2283.0 565.1L2300.9 572.2L2324.7 569.4L2342.6 580.4L2344.6 598.6L2360.4 598.6L2384.3 588.4L2392.2 581.8L2427.9 598.6L2439.9 606.0L2465.7 607.2L2469.6 621.3L2497.4 621.3L2509.4 615.5L2531.2 617.9L2547.1 629.1L2563.0 649.2L2574.9 654.3L2587.6 658.2L2572.9 674.4L2557.0 668.8L2547.1 668.8L2541.1 674.4L2535.2 691.2L2523.3 697.2L2508.6 711.9L2491.5 709.5L2481.6 713.5L2482.0 728.8L2477.6 740.5L2469.6 753.7L2461.7 763.1L2454.6 774.1L2451.8 762.4L2450.2 734.7L2459.7 727.3L2471.6 707.9L2465.7 698.0L2443.8 715.8L2427.9 715.0L2404.1 717.4L2390.2 727.3L2376.3 753.0L2390.2 759.8L2393.4 768.9L2390.2 790.7L2380.3 804.2L2368.4 819.3L2358.5 823.1L2348.5 824.7L2346.9 833.8L2338.6 839.0L2342.6 847.1L2346.1 858.1L2342.6 863.9L2334.6 865.4L2333.8 855.6L2335.4 849.2L2328.7 848.2L2329.5 840.5L2324.7 839.0L2315.2 843.1L2312.8 833.8L2306.8 839.0L2300.9 842.6L2299.3 845.6L2304.1 851.7L2318.7 851.2L2310.8 858.1L2306.0 863.0L2310.8 870.2L2316.0 878.7L2316.4 884.2L2314.8 893.4L2307.2 905.4L2296.9 915.0L2285.0 920.6L2273.1 924.1L2269.9 929.2L2263.6 923.2L2255.6 929.2L2252.4 935.5L2261.2 947.1L2266.3 958.6L2265.1 965.5L2256.4 970.4L2248.5 977.2L2248.5 969.6L2241.3 965.5L2237.3 961.5L2232.6 957.4L2229.4 961.5L2226.2 970.4L2230.6 977.6L2235.4 984.4L2242.9 994.4L2246.1 1005.9L2243.3 1006.3L2234.6 1000.4L2230.6 989.6L2223.4 979.6L2223.4 971.6L2220.7 953.3L2219.5 945.1L2210.7 948.0L2206.4 947.1L2207.6 936.7L2199.6 927.0L2196.8 919.8L2191.7 921.9L2185.7 922.8L2177.8 926.2L2171.8 931.3L2159.9 943.0L2150.8 949.2L2151.2 959.4L2149.2 970.4L2140.1 979.2L2136.1 973.6L2132.1 965.5L2128.1 953.3L2122.2 938.8L2121.4 926.2L2120.2 920.6L2110.3 927.0L2105.5 919.8L2100.3 913.3L2096.4 907.6L2078.5 908.0L2060.6 905.4L2056.7 899.6L2046.7 901.9L2036.8 896.5L2031.6 888.8L2024.9 886.5L2022.9 891.1L2028.9 901.0L2032.8 908.9L2036.8 907.6L2037.2 911.1L2046.7 912.4L2054.7 906.7L2055.9 903.2L2060.6 914.6L2069.8 919.8L2064.6 928.3L2060.6 934.6L2050.7 940.9L2038.8 947.1L2024.9 955.3L2011.0 960.2L2005.0 960.7L2002.3 951.2L2001.1 945.1L1991.1 930.4L1987.2 921.9L1979.2 906.7L1971.3 895.6L1970.9 888.8L1968.1 880.5L1971.3 872.6L1974.9 863.0L1976.1 855.1L1969.3 854.2L1961.4 857.6L1953.4 855.6L1943.5 854.7L1940.7 848.2L1937.5 840.5L1937.5 836.4L1947.5 831.7L1957.4 831.1L1971.3 827.4L1983.2 832.7L1997.1 830.1L1997.9 824.7L1989.2 816.6L1983.2 812.1L1981.2 800.7L1971.3 808.2L1977.2 809.3L1963.3 813.8L1961.4 808.2L1953.4 802.5L1950.6 809.9L1945.9 816.6L1943.5 822.0L1943.5 827.9L1947.1 831.7L1935.5 833.8L1927.6 835.3L1922.0 835.9L1927.6 848.2L1923.6 855.6L1918.5 853.7L1916.1 846.6L1912.5 840.0L1909.7 832.7L1905.8 824.7L1895.8 819.3L1887.9 811.0L1886.7 807.6L1881.1 809.3L1881.9 815.4L1886.3 819.3L1891.9 827.9L1896.2 830.6L1905.8 837.4L1899.8 840.5L1898.2 846.1L1894.6 848.2L1895.8 840.5L1894.2 837.9L1889.1 833.8L1881.9 829.5L1876.0 824.7L1874.0 819.3L1866.1 814.3L1862.1 817.7L1852.2 820.4L1844.6 822.0L1845.0 827.4L1835.5 832.7L1831.1 840.5L1833.1 844.6L1829.5 850.2L1824.4 854.7L1814.4 854.7ZM1809.7 781.0L1820.4 777.8L1837.9 774.1L1839.1 764.4L1833.5 759.8L1831.5 754.4L1825.9 744.7L1824.0 733.2L1825.2 730.3L1816.4 730.3L1820.4 722.8L1812.4 722.8L1807.7 731.8L1810.1 741.9L1812.8 748.9L1820.4 749.6L1818.8 755.7L1820.8 760.4L1813.6 763.7L1815.6 768.3L1811.3 770.9L1819.2 772.8ZM1808.5 767.7L1807.7 759.8L1810.5 751.7L1806.5 746.8L1799.3 747.5L1792.6 754.4L1793.0 759.8L1791.0 768.9L1794.6 772.2L1800.5 770.2ZM1876.0 489.2L1895.8 524.3L1919.7 508.3L1939.5 468.4L1911.7 445.5L1880.0 461.8ZM2038.8 598.6L2054.7 610.8L2062.6 607.2L2054.7 579.1L2070.6 542.4L2102.3 520.8L2086.4 529.4L2050.7 557.8L2040.8 585.8ZM2209.5 468.4L2229.4 493.2L2253.2 483.2L2245.3 445.5L2221.5 433.2ZM2372.4 557.8L2388.2 572.2L2416.0 550.2L2400.2 537.6L2380.3 542.4ZM2541.1 604.8L2555.0 607.2L2559.0 598.6L2547.1 598.6ZM2396.2 805.3L2402.1 800.7L2400.2 784.6L2406.1 787.7L2400.2 768.9L2400.2 754.4L2397.0 754.4L2396.2 775.3L2396.2 793.7ZM2388.2 830.1L2394.2 829.0L2401.3 827.4L2410.1 820.9L2408.1 815.4L2396.2 808.2L2394.2 816.6L2388.2 822.0ZM2392.2 831.7L2396.2 840.5L2392.2 847.1L2392.2 855.6L2391.4 860.5L2387.4 863.0L2382.3 864.9L2376.3 865.4L2370.4 870.2L2368.4 864.9L2358.5 866.8L2352.5 866.4L2360.4 860.5L2370.4 860.1L2376.3 853.2L2383.1 849.2L2388.2 840.5L2388.2 833.8ZM2347.7 871.6L2352.5 868.3L2356.5 872.6L2352.5 880.1L2349.3 880.5ZM2358.5 871.1L2365.6 871.1L2366.8 866.8L2360.4 867.8ZM2312.8 907.6L2316.8 908.9L2312.8 921.9L2309.6 917.6ZM2263.6 933.8L2271.1 930.0L2273.1 932.1L2269.1 938.0L2263.9 936.7ZM2310.8 936.7L2318.0 936.7L2316.8 947.1L2324.7 956.2L2320.7 959.4L2314.8 956.2L2311.2 953.3L2308.8 945.1ZM2316.8 983.6L2322.7 979.6L2330.7 972.4L2334.6 983.6L2330.7 987.6L2324.7 985.6ZM2318.7 969.6L2324.7 965.5L2330.7 965.5L2328.7 971.6L2322.7 973.6ZM2265.1 1005.5L2269.1 1015.5L2273.1 1023.4L2285.0 1025.4L2294.9 1026.6L2292.9 1015.5L2300.9 1007.5L2304.8 991.6L2298.9 983.6L2294.9 985.6L2291.0 992.4L2285.0 993.6L2273.1 1003.6L2267.1 1003.6ZM2210.7 989.2L2219.5 990.8L2231.4 1002.8L2243.3 1013.5L2253.2 1023.4L2253.2 1034.6L2247.3 1035.0L2237.3 1027.4L2231.4 1017.5L2223.4 1005.5ZM2250.0 1038.6L2255.2 1035.4L2269.1 1038.6L2279.0 1039.0L2287.4 1042.6L2286.6 1046.2L2273.1 1044.6L2255.2 1041.0ZM2291.0 1044.2L2304.8 1045.0L2320.7 1044.2L2326.7 1045.4L2328.7 1048.6L2322.7 1052.6L2304.8 1047.4L2292.9 1047.4ZM2306.8 1033.4L2304.8 1023.4L2304.1 1014.7L2310.8 1006.7L2326.7 1005.5L2312.8 1009.5L2320.7 1015.1L2314.8 1017.5L2318.7 1029.4L2312.8 1025.4L2310.8 1033.4ZM2352.5 1017.5L2364.4 1014.7L2376.3 1017.5L2392.2 1021.8L2410.1 1029.4L2412.1 1034.6L2420.0 1043.4L2427.9 1053.4L2416.0 1051.4L2404.1 1042.6L2400.2 1047.4L2392.2 1047.8L2380.3 1044.6L2380.3 1035.4L2366.4 1026.6L2356.5 1023.4ZM2149.2 973.2L2151.2 972.0L2157.1 981.6L2155.9 986.4L2151.6 987.6L2149.2 983.6ZM1881.5 848.2L1894.2 846.6L1891.9 854.7L1882.3 850.2ZM1865.3 832.7L1871.2 831.7L1870.4 843.1L1866.1 843.1ZM1866.5 822.6L1870.0 822.0L1870.0 830.6L1867.2 829.5ZM1925.6 860.5L1936.7 861.5L1935.5 863.0L1925.6 862.0ZM1494.8 922.8L1506.7 916.8L1524.5 922.8L1537.7 929.6L1524.5 930.8L1510.6 923.2L1498.7 922.8ZM1536.9 937.2L1543.2 930.8L1555.1 931.7L1561.1 936.3L1549.2 940.1L1538.4 938.4ZM1521.4 937.2L1529.7 937.2L1527.3 939.2ZM2283.0 1101.1L2285.0 1118.5L2289.0 1136.5L2289.0 1155.2L2300.9 1160.0L2322.7 1154.7L2332.6 1147.1L2352.5 1143.4L2364.4 1148.1L2372.4 1157.6L2378.3 1150.4L2380.3 1162.5L2388.2 1173.8L2402.1 1178.9L2413.3 1180.4L2427.9 1172.3L2429.9 1160.0L2437.9 1145.7L2442.2 1129.6L2439.9 1114.1L2429.9 1103.2L2422.0 1093.8L2412.1 1085.4L2409.3 1071.8L2402.1 1067.7L2398.2 1054.2L2394.2 1063.6L2394.6 1077.9L2390.2 1082.1L2384.3 1079.2L2374.3 1073.8L2370.4 1069.7L2375.5 1060.3L2360.4 1057.5L2352.5 1060.3L2346.5 1071.3L2340.6 1071.8L2334.6 1067.7L2326.7 1075.9L2318.7 1082.1L2314.8 1090.5L2302.9 1093.8L2294.9 1095.5L2285.0 1100.2ZM2406.5 1188.7L2421.2 1189.8L2420.0 1201.0L2415.2 1204.2L2408.9 1197.2ZM2518.1 1157.1L2525.2 1164.9L2530.8 1172.3L2541.1 1173.3L2535.2 1182.5L2531.2 1191.9L2526.4 1191.9L2525.2 1184.0L2522.5 1180.9L2525.2 1174.8L2519.3 1160.0ZM2518.1 1187.7L2524.4 1194.0L2519.3 1204.8L2511.3 1212.0L2503.4 1221.1L2493.5 1217.7L2500.6 1206.4L2511.3 1197.2ZM2022.9 445.5L2050.7 452.6L2078.5 438.2L2062.6 417.4L2030.8 433.2ZM1596.8 796.0L1611.9 771.5L1619.9 784.6L1623.0 796.6L1617.9 800.7L1609.9 796.0ZM1322.8 776.6L1335.9 781.6L1342.7 791.3L1332.0 784.0ZM2752.4 776.6L2765.5 781.6L2772.2 791.3L2761.5 784.0ZM1468.7 414.3L1488.5 397.0L1505.9 384.6L1533.2 372.2L1560.5 375.9L1580.3 382.1L1590.3 397.0L1572.9 424.3L1558.0 446.6L1548.1 468.9L1538.2 488.8L1523.3 508.6L1518.3 523.5L1498.5 513.6L1473.7 496.2L1461.3 483.8L1451.3 459.0L1453.8 434.2ZM1471.2 523.5L1488.5 521.0L1518.3 526.0L1515.8 553.3L1493.5 558.2L1471.2 553.3L1466.2 535.9ZM1476.6 573.3L1488.5 567.1L1510.9 569.6L1528.2 579.5L1548.1 601.9L1563.0 619.2L1575.4 639.1L1589.0 655.2L1582.8 673.8L1575.4 693.7L1567.9 681.2L1553.0 678.8L1538.2 671.3L1523.3 678.8L1508.4 668.8L1493.5 661.4L1498.5 644.0L1488.5 624.2L1478.6 601.9ZM1414.1 473.9L1429.0 478.8L1438.9 501.2L1429.0 503.7L1416.6 491.3ZM1442.6 483.8L1452.0 486.0L1458.8 503.7L1448.0 502.0ZM1448.8 518.5L1461.3 523.5L1463.7 553.3L1451.3 555.7L1446.4 535.9ZM1419.1 523.5L1438.9 528.5L1443.9 548.3L1429.0 553.3L1419.1 540.9ZM1424.0 569.6L1443.9 564.7L1448.8 594.4L1438.9 601.9L1426.5 584.5ZM1453.8 564.7L1473.7 567.1L1471.2 589.5L1458.8 594.4L1451.3 582.0ZM1399.2 619.2L1419.1 611.8L1438.9 624.2L1453.8 636.6L1448.8 649.0L1419.1 644.0L1399.2 636.6ZM1486.0 658.9L1503.4 651.5L1513.3 668.8L1508.4 688.7L1488.5 681.2ZM1400.0 480.0L1412.0 500.0L1405.0 530.0L1398.0 520.0ZM1300.0 1462.4L1328.0 1448.4L1397.8 1473.6L1428.6 1470.8L1428.6 1431.7L1451.0 1428.9L1506.8 1454.0L1546.0 1442.8L1534.8 1406.5L1562.7 1373.0L1613.0 1336.6L1590.7 1361.8L1587.9 1468.0L1635.4 1507.1L1657.7 1523.9L1691.3 1526.7L1730.4 1462.4L1786.3 1414.9L1831.0 1403.7L1914.9 1406.5L1987.5 1389.7L2043.4 1364.6L2127.3 1398.1L2166.4 1367.4L2216.7 1356.2L2278.2 1364.6L2350.9 1364.6L2418.0 1384.2L2507.4 1423.3L2485.1 1473.6L2479.5 1518.3L2557.7 1523.9L2610.8 1537.9L2663.9 1490.4L2740.0 1462.0L2740.0 1700.0L1300.0 1700.0Z" fill="#f7f7f7" stroke="#d3d3d3" stroke-width="1" fill-rule="nonzero"/><path d="M2018.9 811.0L2028.9 802.5L2042.8 799.6L2042.8 811.0L2034.8 815.4L2040.8 828.5L2046.7 835.3L2045.9 850.7L2032.8 853.2L2026.9 848.2L2028.9 836.4L2020.9 824.7ZM2064.6 805.3L2076.5 806.5L2072.5 816.6L2066.6 819.3Z" fill="#ffffff" stroke="#d3d3d3" stroke-width="1"/><path d="M1342.7 787.7L1454.3 787.7L1454.3 785.3L1476.5 793.7L1481.3 791.9L1495.6 800.1L1498.3 802.5L1505.1 809.3L1504.7 824.2L1502.3 827.4L1510.6 825.8L1518.6 823.1L1517.8 819.3L1529.3 815.4L1535.7 811.0L1548.4 811.0L1551.2 808.7L1554.3 801.3L1557.5 797.2L1561.5 797.2L1563.1 799.0L1563.1 807.0L1566.2 811.0M1272.4 620.2L1272.4 709.5L1279.9 709.5L1286.3 719.7L1294.2 713.5L1302.6 724.3L1309.3 737.6L1316.1 742.6M1367.3 874.9L1376.8 874.0L1391.5 880.5L1402.6 880.5L1402.6 878.2L1409.4 878.2L1417.3 888.4L1422.9 891.1L1425.7 887.4L1429.6 887.4L1437.2 897.9L1446.3 905.0M1466.2 953.3L1466.6 950.8L1468.2 946.7L1473.3 946.7L1473.3 941.7L1470.9 941.7L1470.9 939.7L1478.5 939.7L1481.7 936.7M1478.5 939.7L1478.1 947.5L1482.1 948.4M1478.1 947.5L1478.1 953.3L1474.5 956.6M1478.1 953.3L1482.9 955.8L1484.0 958.2M1485.6 959.8L1490.8 955.8L1494.8 952.9L1498.7 951.2L1501.9 951.2M1492.0 967.1L1497.5 968.0L1499.9 968.0M1503.1 973.2L1503.1 978.4M1524.9 976.8L1525.7 980.0M1549.2 964.3L1544.8 967.1L1542.8 973.2L1544.8 982.0L1553.9 983.6L1563.1 986.4L1564.3 996.4L1565.1 1003.6L1566.6 1006.7M1566.6 1006.7L1573.4 1007.5L1577.4 1005.5L1580.1 997.6L1583.3 995.6L1590.1 993.6L1593.2 990.8M1593.2 990.8L1591.3 988.0L1593.2 977.2M1593.2 990.8L1594.8 993.6L1595.6 1005.5L1601.6 1005.5L1606.0 1003.6M1605.6 988.0L1602.0 995.6L1606.0 1003.6M1606.0 1003.6L1613.9 1002.4L1617.5 1003.2M1617.9 989.2L1615.9 995.6L1617.5 1003.2M1617.5 1003.2L1623.8 1002.4L1627.4 994.8M1566.6 1006.7L1554.7 1007.1L1556.7 1016.3L1554.3 1028.2M1518.6 1005.5L1524.5 1009.9L1533.3 1011.9M1533.3 1011.9L1539.6 1016.7L1542.8 1021.0L1554.3 1028.2M1513.4 1025.0L1517.4 1031.0L1522.6 1025.4L1528.5 1021.0L1533.3 1011.9M1554.3 1028.2L1542.8 1032.2L1539.2 1040.6L1544.4 1049.0L1551.9 1049.8L1551.9 1055.4L1555.9 1055.4M1555.9 1055.4L1559.1 1061.9L1556.7 1073.4L1556.7 1082.1L1552.7 1085.4M1556.7 1082.1L1559.9 1087.5L1559.5 1094.7L1562.7 1102.4L1565.8 1104.5M1555.9 1055.4L1559.9 1055.9L1572.6 1050.6L1573.0 1057.5L1582.1 1061.9L1588.5 1065.6L1593.2 1069.7L1592.8 1077.1L1601.2 1077.1L1600.8 1082.9L1603.6 1085.0L1601.2 1091.7M1601.2 1091.7L1597.6 1089.6L1586.9 1090.9L1583.7 1101.9M1583.7 1101.9L1577.0 1104.5L1571.4 1101.5L1565.8 1104.5M1601.2 1091.7L1602.8 1101.5L1610.7 1102.4L1612.3 1109.7L1615.5 1116.7M1583.7 1101.9L1594.0 1109.7L1603.6 1115.8L1599.6 1124.2L1609.9 1124.7L1615.5 1116.7M1615.5 1116.7L1619.1 1118.9L1618.7 1123.4L1611.1 1128.3L1603.6 1137.4M1603.6 1137.4L1609.9 1140.6L1613.1 1142.5L1620.2 1153.8M1603.6 1137.4L1601.2 1147.6L1600.4 1154.7M1565.8 1104.5L1561.5 1111.0L1559.9 1122.9L1555.5 1129.6L1553.9 1138.8L1553.9 1150.4L1552.3 1164.9L1549.6 1177.4L1547.6 1187.7L1547.2 1203.7L1547.6 1212.0L1546.4 1220.5L1544.4 1232.3L1540.8 1240.2L1544.4 1247.7L1546.8 1254.1L1559.9 1256.0M1877.6 719.7L1881.9 703.8L1880.0 682.5L1887.9 668.8L1895.8 641.0L1904.6 633.5L1913.7 626.9M1913.7 626.9L1925.6 639.9L1927.6 661.2M1913.7 626.9L1927.6 632.4L1935.5 619.0L1945.5 628.0L1947.5 617.9M1945.5 628.0L1951.4 644.1L1949.4 654.3L1951.4 682.5L1957.4 687.8L1942.7 707.9M1942.7 716.6L1941.9 728.8L1944.3 740.5L1955.0 744.7L1958.6 755.7L1959.4 768.3L1972.5 767.7L1980.8 779.1L1991.1 784.0L1989.9 794.9L1984.0 799.0M1925.6 755.7L1926.8 764.4L1924.4 767.7L1928.0 776.6L1922.0 787.1M1926.8 771.5L1935.5 769.6L1953.4 773.4L1959.4 768.3M1925.6 755.7L1934.8 754.4L1937.9 744.0L1944.3 740.5M1916.1 738.3L1927.6 739.8L1937.9 744.0M1919.7 730.3L1931.6 727.3L1941.9 728.8M1922.0 787.1L1923.2 793.7L1931.2 795.5L1937.9 791.9L1943.5 792.5L1948.3 794.3L1951.8 803.0L1950.2 809.3M1937.9 791.9L1943.9 801.9L1944.3 808.2M1922.4 815.4L1927.6 818.2L1935.5 817.1L1941.9 816.6L1945.9 818.2M1922.4 815.4L1917.3 812.1L1912.9 804.8L1917.7 801.3L1923.2 794.3M1935.9 829.0L1939.5 826.9L1943.5 827.4M1935.9 829.0L1936.7 833.2M1997.1 830.1L2002.3 830.1L2005.0 832.2L2005.8 837.4L2010.2 839.5L2008.6 846.6L2010.2 852.2L2000.7 852.7L1991.1 854.2L1983.2 854.2L1977.6 854.2L1975.3 859.1M1990.7 819.8L1999.1 820.9L2007.0 823.1L2017.0 828.5L2024.9 828.5M2005.0 832.2L2011.0 831.1L2017.0 832.2L2017.3 840.5L2011.0 839.5M2010.2 839.5L2017.0 843.6L2022.9 840.5L2026.5 846.1M2010.2 852.2L2013.0 858.6L2015.0 863.0L2013.8 867.8L2022.1 874.9L2021.7 881.9L2022.9 886.5M2000.7 852.7L1996.3 856.1L1995.9 865.4L1987.2 875.4L1999.1 881.5L2009.8 890.2L2017.0 890.6L2021.7 893.4L2024.5 893.4M1975.3 864.9L1977.6 866.8L1974.5 871.1L1978.4 875.9L1987.2 875.4M1971.7 872.1L1974.9 874.0L1973.3 880.5L1971.3 888.8M2002.3 945.5L2011.0 941.3L2018.9 943.4L2026.9 936.3L2038.8 934.6L2053.1 918.9L2051.5 918.9L2038.8 913.3L2037.2 912.4M2038.8 934.6L2043.2 944.2M2053.1 918.9L2054.7 909.8L2055.5 906.3M1987.2 875.4L1979.2 879.6L1983.2 886.5L1977.2 889.3L1971.3 889.3M1968.1 880.5L1970.9 888.8M2046.3 851.7L2059.8 848.2L2070.6 853.2L2075.3 855.1L2074.5 863.0L2072.5 869.2L2074.1 879.6L2077.3 880.1L2080.5 889.3L2074.1 887.4L2076.5 893.4L2083.3 899.2L2076.9 908.0M2042.8 826.9L2054.7 831.1L2058.6 831.1L2064.6 824.2L2070.6 827.4L2075.7 831.7L2080.1 837.9L2088.4 843.6L2096.4 851.2M2054.7 831.1L2054.7 811.0L2064.6 807.6L2074.5 814.3L2078.5 819.3L2090.0 818.2L2094.4 827.4L2103.9 834.8L2108.3 830.1L2114.2 825.8L2124.2 824.7L2126.9 820.9L2137.7 822.0L2146.4 822.6L2150.8 826.3M2026.9 803.0L2020.9 793.7L2017.0 787.7L2020.9 779.7L2034.0 771.5L2048.7 775.3L2058.6 774.7L2070.6 771.5L2076.5 768.9L2070.6 762.4L2076.5 755.7L2090.4 751.7L2106.3 746.1L2124.2 755.7L2134.9 754.4L2136.1 774.1L2150.0 775.3L2159.9 776.0L2165.9 781.0L2179.0 786.5M2150.8 826.3L2150.0 811.5L2159.9 808.2L2161.9 798.4L2171.8 799.6L2179.0 786.5M2179.0 786.5L2189.7 778.5L2197.6 776.6L2209.5 781.6L2221.5 768.9L2229.4 770.9L2239.3 779.1L2253.2 779.7L2261.2 784.6L2269.1 786.5L2285.0 779.7L2295.3 782.2M2179.0 786.5L2183.7 793.7L2191.7 799.6L2193.7 805.3L2201.6 811.0L2213.5 816.6L2217.5 823.7L2229.4 824.2L2249.3 829.5L2257.2 825.8L2269.1 824.2L2277.1 818.8L2285.0 811.5L2292.9 808.2L2298.9 801.9L2308.0 799.6L2300.9 793.7L2295.3 782.2M2295.3 782.2L2304.8 779.7L2308.8 765.1L2320.7 759.1L2332.6 763.7L2338.6 782.8L2350.5 788.3L2360.4 792.5L2367.2 791.9L2364.4 798.4L2360.8 810.4L2353.3 811.5L2352.5 822.0L2350.9 825.3M2350.9 825.3L2346.5 825.3L2340.6 827.4L2334.6 830.1L2325.9 838.5M2334.6 849.2L2338.6 846.6L2342.2 845.1M2150.8 826.3L2142.0 831.7L2134.1 835.3L2125.4 840.5L2130.1 851.2L2128.5 853.2L2132.1 859.6L2141.2 860.5L2146.0 866.4L2145.2 872.6L2148.0 877.3L2154.0 885.6L2161.1 887.9L2169.8 893.4L2182.5 896.1L2184.9 898.8L2197.6 896.5L2208.4 889.7L2214.3 891.1L2219.5 894.3L2223.4 897.9L2224.2 905.4L2220.3 913.3L2225.0 912.9L2227.4 919.8L2235.4 921.1L2241.3 919.3L2249.3 917.6L2256.0 918.5L2261.2 924.1M2108.3 830.1L2112.7 836.9L2125.4 840.5M2103.9 834.8L2099.9 841.5L2104.3 847.1L2113.8 846.1L2125.4 840.5M2128.5 853.2L2116.2 855.6L2114.2 866.8L2108.3 870.2L2107.5 879.1L2096.4 887.0L2080.5 889.3M2096.4 851.2L2102.3 853.2L2110.3 850.7L2116.2 848.7L2128.5 853.2M2132.1 859.6L2126.2 872.6L2128.1 877.3L2128.1 884.2L2116.2 895.6L2110.3 897.9L2108.3 904.5L2114.2 911.5L2103.1 914.6M2154.0 885.6L2150.4 892.0L2161.9 898.3L2169.8 901.9L2182.5 902.8L2182.5 896.1M2182.9 903.2L2185.7 908.0L2182.1 911.1L2185.7 921.9M2197.6 908.9L2200.4 921.9L2198.4 926.2M2219.5 894.3L2210.3 902.3L2206.4 914.2L2202.8 921.9L2200.0 924.9M2229.4 924.1L2221.5 931.7L2220.7 938.8L2225.0 945.5L2222.3 952.5L2225.4 971.6M2233.4 924.1L2234.2 932.5L2231.4 940.5L2239.3 939.2L2248.1 941.3L2251.2 951.2L2245.3 954.1L2239.3 961.5M2251.2 951.2L2259.2 953.3L2253.2 967.6L2247.3 970.0M2238.5 920.2L2245.3 930.4L2249.3 935.5L2257.2 945.1L2259.2 953.3M2229.8 985.6L2234.2 988.8L2237.7 986.8M2267.9 1004.7L2277.1 1005.9L2287.0 1005.5L2291.0 997.6L2300.1 994.8M2392.2 1021.8L2392.2 1047.8M1825.2 862.5L1825.5 867.8L1825.9 875.4L1818.0 879.1L1811.3 886.5L1797.8 892.5L1797.8 897.0M1797.8 897.0L1779.9 897.0M1797.8 897.0L1797.8 898.8L1813.2 909.4M1797.8 898.8L1784.6 904.5L1784.6 915.5L1780.7 917.6L1780.7 924.9L1764.8 924.9M1813.2 909.4L1808.5 928.3L1810.5 949.2L1786.6 949.2L1783.9 952.9M1766.8 946.3L1776.7 945.1L1783.9 952.9M1783.9 952.9L1786.6 961.9L1777.9 961.1M1765.6 957.0L1777.5 957.8M1765.6 958.6L1777.5 959.0M1766.0 961.9L1777.9 961.1L1778.3 965.5L1772.7 968.0M1779.5 973.6L1786.6 977.6L1790.6 978.4L1786.6 983.6M1790.6 978.4L1798.5 981.6L1802.5 994.0M1798.5 981.6L1799.7 971.6L1810.5 970.0M1786.6 961.9L1798.5 966.3L1799.7 971.6L1810.5 970.0L1814.4 963.5L1824.4 953.3L1832.3 951.7L1837.5 950.0L1846.2 949.6L1849.0 943.8L1849.0 933.8M1832.3 951.7L1834.3 959.4L1841.0 961.5L1846.6 964.7L1848.6 957.4L1860.1 960.2L1872.0 958.2L1886.3 956.6M1820.4 991.2L1821.2 977.6L1821.6 967.6L1831.9 967.1L1834.3 973.6L1837.1 987.2M1810.5 970.0L1821.6 967.6M1838.7 986.8L1835.9 968.0L1837.5 966.3M1843.0 986.0L1843.4 975.6L1846.6 964.7M1866.5 993.2L1870.0 985.6L1879.2 983.6L1885.9 975.6L1890.3 965.5L1888.3 959.0M1890.3 965.5L1893.9 971.6L1887.9 981.6L1893.9 981.6L1895.8 995.6L1891.9 1003.6M1893.9 981.6L1905.8 975.6L1917.7 967.6L1922.8 968.0M1922.8 968.0L1925.6 977.6L1931.6 981.6L1941.5 990.8M1922.8 968.0L1919.7 960.7L1921.6 955.3L1927.6 932.5L1931.6 930.4M1886.3 956.6L1892.7 945.1L1893.9 928.3L1891.9 917.6L1880.0 915.5M1891.9 917.6L1927.6 932.5M1849.0 933.8L1856.1 932.5L1880.0 915.5M1813.2 909.4L1837.1 926.2L1845.4 932.1L1849.0 933.8M1866.5 853.7L1865.3 864.9L1862.1 870.2L1870.0 885.6L1871.2 902.3L1878.0 912.0L1880.0 915.5M1878.0 871.6L1873.2 878.2L1870.0 885.6M1931.6 879.1L1931.6 921.9M1931.6 921.9L1931.6 930.4L1927.6 930.4M1931.6 921.9L1979.2 921.9M1985.6 938.8L1979.2 943.0L1977.2 954.1L1982.8 953.3L1991.1 953.7L2000.7 961.5M1977.2 954.1L1968.9 969.6L1968.5 977.6L1963.3 980.0L1973.3 991.6M1922.8 968.0L1929.6 976.0L1939.5 973.2L1954.6 972.8L1961.0 963.5L1968.5 971.6M2000.7 961.5L2002.3 967.6L2007.0 975.6L2022.9 979.6L2011.0 991.6L1999.1 995.6L1995.1 995.6L1987.2 997.6L1973.3 991.6M1995.1 1017.9L1995.1 996.0M1973.3 991.6L1967.3 994.8L1967.3 1007.5L1967.3 1015.5L1981.6 1023.4L1988.0 1029.8M1967.3 994.8L1957.4 996.8L1949.4 993.6M1957.4 996.8L1951.4 1005.5L1949.8 1016.7L1953.4 1015.5L1967.3 1015.5M1949.8 1016.7L1947.5 1022.6L1949.0 1029.4L1954.2 1044.6L1947.1 1045.4L1945.1 1057.9L1940.3 1058.3L1933.2 1056.3L1920.5 1055.4L1919.7 1049.4L1918.9 1040.6L1911.7 1039.4L1902.2 1043.4L1895.8 1035.4L1880.7 1035.4M1880.7 1031.4L1884.3 1029.8L1889.9 1029.4L1896.6 1019.4L1903.0 1013.5L1903.0 1001.6L1906.2 994.4L1921.6 994.8L1931.6 991.6L1941.5 990.8L1947.5 993.6L1954.6 997.6M1871.2 1002.4L1877.2 1002.8L1885.1 1002.8L1895.8 1003.6L1897.8 997.6L1906.2 994.4M1877.2 1002.8L1877.2 1007.5L1869.2 1007.5M1885.1 1002.8L1883.9 1007.5L1889.5 1019.0L1880.0 1025.4L1876.4 1027.0M1879.2 1081.3L1885.9 1080.0L1905.8 1081.7L1915.7 1084.2L1925.2 1082.5L1932.8 1083.3M1915.7 1084.2L1915.7 1101.1L1911.7 1101.1L1911.7 1113.2L1911.7 1129.2L1899.8 1128.3M1919.7 1055.4L1919.7 1063.6L1927.6 1063.6L1927.6 1077.9L1925.2 1082.5M1932.8 1083.3L1943.5 1077.9L1953.0 1074.2L1963.3 1067.7L1964.5 1061.5L1965.7 1049.8L1962.9 1048.6L1954.2 1044.6M1953.0 1074.2L1963.3 1079.2L1962.9 1088.4L1961.4 1096.8L1956.6 1102.8M1932.8 1083.3L1939.5 1094.7L1947.5 1101.9L1956.6 1102.8M1965.7 1049.8L1969.3 1051.4L1971.3 1069.7L1974.5 1077.9L1972.1 1080.0L1968.1 1071.8L1963.3 1067.7M1969.3 1057.5L1981.2 1057.5L1992.7 1053.4M1911.7 1113.2L1919.7 1118.5L1927.6 1116.3L1937.5 1111.9L1947.5 1101.9L1956.6 1102.8M1956.6 1102.8L1959.4 1111.9L1959.4 1119.8L1962.9 1122.0M1939.5 1134.2L1945.5 1130.1L1949.0 1134.2L1945.1 1139.2L1939.5 1134.2M2701.9 620.2L2701.9 709.5L2709.5 709.5L2715.8 719.7L2723.8 713.5L2732.1 724.3L2738.9 737.6L2745.6 742.6" fill="none" stroke="#dedede" stroke-width="1"/><g fill="rgb(99,173,236)" fill-opacity="0.62" stroke="rgb(90,160,225)" stroke-opacity="0.35" stroke-width="0.8"><circle cx="1441.0" cy="838.5" r="58.9"/><circle cx="1391.9" cy="719.2" r="24.6"/><circle cx="1429.4" cy="918.3" r="8.9"/><circle cx="1609.2" cy="800.2" r="4.0"/><circle cx="1577.0" cy="877.2" r="2.6"/><circle cx="1487.0" cy="953.4" r="13.5"/><circle cx="1472.0" cy="952.0" r="8.0"/><circle cx="1511.2" cy="979.6" r="8.5"/><circle cx="1500.0" cy="973.5" r="2.6"/><circle cx="1494.3" cy="963.5" r="2.6"/><circle cx="1529.0" cy="929.2" r="5.2"/><circle cx="1523.3" cy="911.0" r="3.2"/><circle cx="1525.4" cy="940.0" r="4.4"/><circle cx="1545.0" cy="934.8" r="3.6"/><circle cx="1547.0" cy="924.4" r="2.6"/><circle cx="1509.6" cy="935.6" r="2.6"/><circle cx="1554.8" cy="935.6" r="2.6"/><circle cx="1577.4" cy="938.5" r="2.6"/><circle cx="1590.3" cy="954.2" r="11.3"/><circle cx="1595.5" cy="960.2" r="5.6"/><circle cx="1590.0" cy="971.0" r="6.9"/><circle cx="1584.2" cy="941.3" r="3.2"/><circle cx="1587.0" cy="944.0" r="3.2"/><circle cx="1556.0" cy="962.7" r="5.6"/><circle cx="1560.0" cy="964.7" r="4.0"/><circle cx="1540.7" cy="997.7" r="5.6"/><circle cx="1576.6" cy="985.2" r="3.6"/><circle cx="1599.5" cy="993.3" r="2.6"/><circle cx="1612.5" cy="995.7" r="2.6"/><circle cx="1622.0" cy="997.3" r="6.5"/><circle cx="1522.0" cy="1018.3" r="2.8"/><circle cx="1638.5" cy="1059.9" r="26.2"/><circle cx="1543.0" cy="1063.5" r="7.7"/><circle cx="1573.7" cy="1080.4" r="4.8"/><circle cx="1558.4" cy="1107.4" r="12.5"/><circle cx="1600.8" cy="1107.8" r="6.9"/><circle cx="1577.4" cy="1153.4" r="2.8"/><circle cx="1609.2" cy="1151.4" r="11.7"/><circle cx="1599.5" cy="1253.0" r="2.6"/><circle cx="1739.9" cy="951.0" r="2.8"/><circle cx="1677.0" cy="607.0" r="2.6"/><circle cx="1759.7" cy="671.5" r="5.3"/><circle cx="1804.8" cy="695.0" r="2.4"/><circle cx="1870.6" cy="702.5" r="6.3"/><circle cx="1908.5" cy="657.4" r="2.7"/><circle cx="1938.2" cy="689.8" r="2.7"/><circle cx="1800.5" cy="833.7" r="33.8"/><circle cx="1873.4" cy="774.1" r="60.8"/><circle cx="1842.2" cy="801.9" r="46.8"/><circle cx="1876.6" cy="815.6" r="50.6"/><circle cx="1826.8" cy="767.7" r="24.5"/><circle cx="1895.8" cy="797.7" r="18.2"/><circle cx="1802.8" cy="761.8" r="8.7"/><circle cx="1870.0" cy="741.9" r="8.7"/><circle cx="1912.0" cy="767.0" r="8.4"/><circle cx="1936.7" cy="722.3" r="6.0"/><circle cx="1933.1" cy="735.2" r="6.6"/><circle cx="1929.7" cy="747.5" r="7.0"/><circle cx="1944.4" cy="761.2" r="7.3"/><circle cx="1945.8" cy="797.3" r="2.7"/><circle cx="1960.6" cy="787.3" r="2.9"/><circle cx="1933.5" cy="806.7" r="8.7"/><circle cx="1931.2" cy="824.4" r="6.9"/><circle cx="1919.5" cy="840.0" r="19.7"/><circle cx="1969.1" cy="842.4" r="10.9"/><circle cx="1964.1" cy="863.9" r="22.0"/><circle cx="1971.5" cy="883.0" r="12.8"/><circle cx="1976.8" cy="868.0" r="4.4"/><circle cx="1978.5" cy="885.0" r="2.7"/><circle cx="1985.6" cy="862.0" r="2.7"/><circle cx="2006.5" cy="828.0" r="4.7"/><circle cx="2009.8" cy="836.0" r="2.7"/><circle cx="2023.3" cy="836.5" r="4.4"/><circle cx="2005.4" cy="870.7" r="5.0"/><circle cx="2047.8" cy="871.3" r="8.2"/><circle cx="2020.4" cy="889.5" r="2.7"/><circle cx="2034.0" cy="905.0" r="6.5"/><circle cx="2036.3" cy="907.8" r="3.5"/><circle cx="2047.2" cy="914.0" r="5.9"/><circle cx="2009.2" cy="913.0" r="5.0"/><circle cx="2055.7" cy="932.8" r="2.9"/><circle cx="2110.2" cy="789.4" r="4.1"/><circle cx="2087.6" cy="829.4" r="3.8"/><circle cx="2130.9" cy="829.7" r="2.9"/><circle cx="2120.8" cy="847.4" r="2.7"/><circle cx="2093.4" cy="868.3" r="3.8"/><circle cx="2098.1" cy="894.5" r="2.9"/><circle cx="2144.0" cy="919.6" r="14.7"/><circle cx="1803.3" cy="881.9" r="4.1"/><circle cx="1842.8" cy="893.6" r="3.2"/><circle cx="1870.8" cy="862.1" r="2.4"/><circle cx="1890.8" cy="858.6" r="5.0"/><circle cx="1903.2" cy="899.5" r="2.9"/><circle cx="1948.2" cy="904.8" r="2.9"/><circle cx="1811.6" cy="858.0" r="4.7"/><circle cx="1819.8" cy="835.0" r="2.4"/><circle cx="2227.5" cy="863.1" r="36.4"/><circle cx="2341.5" cy="857.2" r="43.7"/><circle cx="2380.5" cy="859.0" r="40.4"/><circle cx="2313.1" cy="915.9" r="24.7"/><circle cx="2233.7" cy="949.4" r="35.1"/><circle cx="2251.5" cy="924.3" r="18.2"/><circle cx="2238.4" cy="995.0" r="12.9"/><circle cx="2245.7" cy="1008.4" r="17.2"/><circle cx="2314.6" cy="944.0" r="5.1"/><circle cx="2288.0" cy="995.3" r="4.7"/><circle cx="2285.8" cy="1016.0" r="6.6"/><circle cx="2164.8" cy="895.5" r="3.3"/><circle cx="2191.8" cy="898.4" r="5.5"/><circle cx="2191.4" cy="911.1" r="3.6"/><circle cx="2214.8" cy="923.2" r="2.9"/><circle cx="2247.5" cy="962.1" r="2.9"/><circle cx="2153.9" cy="984.0" r="4.0"/><circle cx="2125.5" cy="995.7" r="2.6"/><circle cx="2240.3" cy="803.0" r="4.4"/><circle cx="2367.0" cy="983.0" r="4.7"/><circle cx="2430.8" cy="983.3" r="2.6"/><circle cx="2505.8" cy="990.6" r="2.6"/><circle cx="2632.2" cy="1004.8" r="2.6"/><circle cx="2399.8" cy="1035.4" r="2.9"/><circle cx="2331.7" cy="1048.1" r="2.9"/><circle cx="2468.3" cy="1050.7" r="2.9"/><circle cx="2495.6" cy="1074.4" r="5.1"/><circle cx="2488.3" cy="1098.0" r="2.9"/><circle cx="2577.2" cy="1067.4" r="7.7"/><circle cx="2565.6" cy="1066.0" r="2.6"/><circle cx="2540.8" cy="1085.3" r="2.6"/><circle cx="2566.3" cy="1099.0" r="5.1"/><circle cx="2627.5" cy="1099.0" r="4.0"/><circle cx="2670.9" cy="1083.1" r="2.6"/><circle cx="2363.4" cy="1113.7" r="41.2"/><circle cx="2517.1" cy="1199.7" r="19.5"/><circle cx="2246.4" cy="672.0" r="20.0"/><circle cx="1913.2" cy="1553.0" r="2.6"/><circle cx="1926.6" cy="1145.8" r="16.7"/><circle cx="1946.0" cy="1135.0" r="4.5"/><circle cx="1958.4" cy="1122.2" r="4.5"/><circle cx="1902.0" cy="1099.4" r="4.7"/><circle cx="1928.3" cy="1103.3" r="2.7"/><circle cx="1952.9" cy="1090.2" r="4.2"/><circle cx="1933.3" cy="1073.3" r="2.7"/><circle cx="1903.3" cy="1065.9" r="2.7"/><circle cx="1967.3" cy="1066.4" r="3.2"/><circle cx="1984.7" cy="1068.6" r="3.0"/><circle cx="2053.4" cy="1098.4" r="2.7"/><circle cx="2063.1" cy="1095.6" r="3.0"/><circle cx="2018.4" cy="1093.4" r="2.7"/><circle cx="2012.7" cy="1064.4" r="6.2"/><circle cx="2005.5" cy="1060.6" r="2.5"/><circle cx="2053.4" cy="1030.9" r="2.7"/><circle cx="1968.3" cy="1035.8" r="2.7"/><circle cx="1951.7" cy="1026.2" r="5.5"/><circle cx="1952.2" cy="1020.4" r="3.0"/><circle cx="1963.6" cy="1005.3" r="3.5"/><circle cx="1984.9" cy="1009.8" r="3.5"/><circle cx="2005.8" cy="1000.8" r="2.7"/><circle cx="1928.3" cy="1018.5" r="2.7"/><circle cx="1898.3" cy="1010.8" r="2.7"/><circle cx="1880.7" cy="1015.7" r="2.7"/><circle cx="1876.0" cy="1005.8" r="2.7"/><circle cx="1880.7" cy="995.9" r="2.7"/><circle cx="1860.8" cy="1013.3" r="2.7"/><circle cx="1792.4" cy="1188.4" r="2.7"/><circle cx="1790.6" cy="934.6" r="2.7"/><circle cx="1823.9" cy="939.6" r="2.7"/><circle cx="1873.1" cy="944.6" r="2.7"/><circle cx="1908.5" cy="948.1" r="2.7"/><circle cx="1950.9" cy="950.8" r="2.7"/><circle cx="1985.6" cy="948.4" r="2.7"/><circle cx="2023.3" cy="950.8" r="2.7"/><circle cx="1772.7" cy="952.8" r="2.5"/><circle cx="1775.0" cy="958.4" r="2.5"/><circle cx="1775.6" cy="964.3" r="3.3"/><circle cx="1827.2" cy="963.4" r="2.7"/><circle cx="1842.5" cy="970.8" r="2.7"/><circle cx="1863.4" cy="975.8" r="2.7"/><circle cx="1789.8" cy="970.8" r="2.5"/><circle cx="1787.4" cy="978.5" r="2.5"/><circle cx="1811.6" cy="983.2" r="3.2"/><circle cx="1828.3" cy="984.3" r="2.7"/><circle cx="1837.2" cy="983.2" r="2.5"/><circle cx="1794.8" cy="988.2" r="2.5"/><circle cx="1918.2" cy="985.8" r="2.7"/><circle cx="1954.4" cy="984.9" r="3.0"/><circle cx="1987.4" cy="979.4" r="3.0"/><circle cx="2000.7" cy="968.5" r="2.7"/><circle cx="2125.8" cy="995.8" r="2.7"/></g></g><rect x="1308.4" y="1635.7" width="458.3" height="41.9" fill="#fafafa"/></svg><div style="position:absolute;left:1334.5px;top:374.5px;width:67px;height:69.5px;background:rgba(0,0,0,0.09)"></div><div style="position:absolute;left:1331.8px;top:371.8px;width:67.2px;height:67.2px;box-sizing:border-box;border:1.6px solid #9a9a9a;background:rgba(246,246,246,0.92)"></div><div style="position:absolute;left:1334.5px;top:476.5px;width:66px;height:253.5px;background:rgba(0,0,0,0.09)"></div><div style="position:absolute;left:1331.8px;top:473.6px;width:66.4px;height:251.6px;box-sizing:border-box;border:1.6px solid #9a9a9a;background:rgba(246,246,246,0.88)"></div><svg style="position:absolute;left:0;top:0" width="3705" height="1855" viewBox="0 0 3705 1855"><circle cx="1367.2" cy="404.2" r="12.3" fill="none" stroke="#666666" stroke-width="2.2"/><line x1="1358.8" y1="412.8" x2="1351" y2="420.3" stroke="#666666" stroke-width="2.6" stroke-linecap="round"/><rect x="1351.9" y="507" width="25.6" height="5.3" fill="#666666"/><rect x="1362" y="497.2" width="5.3" height="25" fill="#666666"/><rect x="1351.9" y="560.6" width="25.6" height="5.6" fill="#666666"/><path d="M1347.8 620.5 L1364.8 601.6 L1381.8 620.5 M1351.6 616.5 V634.6 H1378.2 V616.5 M1361.5 634.6 V620.2 H1368.8 V634.6" fill="none" stroke="#666666" stroke-width="2.5"/><rect x="1340" y="652.5" width="50" height="2" fill="#d6d6d6"/><path d="M1357.8 677.1 L1373.7 689.6 L1357.8 702.2Z" fill="#666666"/><rect x="377.50" y="1735.15" width="17.20" height="1.9" fill="#5f5f5f"/><rect x="385.15" y="1727.50" width="1.9" height="17.20" fill="#5f5f5f"/><rect x="370.30" y="1725.25" width="11.80" height="1.9" fill="#5f5f5f"/><rect x="375.25" y="1720.30" width="1.9" height="11.80" fill="#5f5f5f"/><rect x="390.30" y="1725.25" width="11.80" height="1.9" fill="#5f5f5f"/><rect x="395.25" y="1720.30" width="1.9" height="11.80" fill="#5f5f5f"/><rect x="370.30" y="1745.25" width="11.80" height="1.9" fill="#5f5f5f"/><rect x="375.25" y="1740.30" width="1.9" height="11.80" fill="#5f5f5f"/><rect x="390.30" y="1745.25" width="11.80" height="1.9" fill="#5f5f5f"/><rect x="395.25" y="1740.30" width="1.9" height="11.80" fill="#5f5f5f"/><rect x="382.50" y="1717.75" width="7.20" height="1.9" fill="#5f5f5f"/><rect x="385.15" y="1715.10" width="1.9" height="7.20" fill="#5f5f5f"/><rect x="382.50" y="1752.65" width="7.20" height="1.9" fill="#5f5f5f"/><rect x="385.15" y="1750.00" width="1.9" height="7.20" fill="#5f5f5f"/><rect x="365.10" y="1735.15" width="7.20" height="1.9" fill="#5f5f5f"/><rect x="367.75" y="1732.50" width="1.9" height="7.20" fill="#5f5f5f"/><rect x="400.00" y="1735.15" width="7.20" height="1.9" fill="#5f5f5f"/><rect x="402.65" y="1732.50" width="1.9" height="7.20" fill="#5f5f5f"/><path d="M2846.8 1723.5 H2862.3 A16.2 16.2 0 0 1 2862.3 1756 H2842.1" fill="none" stroke="#bcbcbc" stroke-width="2"/><path d="M2839.3 1723.6 L2846.8 1717.3 V1730 Z" fill="#bcbcbc"/><path d="M2972.2 1723.5 H2956.1 A16.2 16.2 0 0 0 2956.1 1756 H2976.9" fill="none" stroke="#bcbcbc" stroke-width="2"/><path d="M2979.4 1723.6 L2972.2 1717.3 V1730 Z" fill="#bcbcbc"/><rect x="3039.2" y="1717.4" width="2.8" height="12.4" fill="#bcbcbc"/><path d="M3052 1723.6 H3062.2 A16.3 16.3 0 0 1 3062.2 1756.2 H3042" fill="none" stroke="#bcbcbc" stroke-width="2"/><path d="M3044.4 1723.6 L3052 1717.4 V1730 Z" fill="#bcbcbc"/><path d="M3162 1728.6 H3139 A8.85 8.85 0 0 0 3139 1746.3 H3160 A8.85 8.85 0 0 0 3167.5 1733" fill="none" stroke="#bcbcbc" stroke-width="2"/><path d="M3169.4 1728.6 L3162 1722.4 V1735 Z" fill="#bcbcbc"/><path d="M3203.9 1733.1 H3222.2 L3213 1744.9Z" fill="#bcbcbc"/><rect x="3275" y="1721" width="2" height="34" fill="#bdbdbd"/><path d="M3352.5 1741.2 H3343.5 Q3342.3 1741.2 3342.3 1740 V1719.5 Q3342.3 1718.3 3343.5 1718.3 H3377 Q3378.2 1718.3 3378.2 1719.5 V1740 Q3378.2 1741.2 3377 1741.2 H3368" fill="none" stroke="#666666" stroke-width="2.4"/><rect x="3359.1" y="1734.5" width="2.4" height="17" fill="#666666"/><path d="M3353.4 1750 H3367 L3360.2 1757.6Z" fill="#666666"/><path d="M3392.5 1733.1 H3411 L3401.7 1744.9Z" fill="#666666"/><path d="M3469 1733 V1718.5 H3483.5 M3493 1718.5 H3507.5 V1733 M3507.5 1741.5 V1756 H3493 M3483.5 1756 H3469 V1741.5" fill="none" stroke="#666666" stroke-width="2"/><rect x="3477.3" y="1726.5" width="22.3" height="21.8" fill="none" stroke="#666666" stroke-width="2"/><g fill="none" stroke="#666666" stroke-width="2"><circle cx="3593.1" cy="1724.7" r="5.8"/><circle cx="3570.9" cy="1737.3" r="5.8"/><circle cx="3593.1" cy="1750.1" r="5.8"/><path d="M3575.9 1734.4 L3588.1 1727.6 M3575.9 1740.2 L3588.1 1747.2"/></g><path d="M606 403.2 H629.9 L618 428.8Z" fill="#76a67c"/><path d="M606.5 1197.5 H630.3 L618.4 1223Z" fill="#76a67c"/></svg><div class="bo" style="top:353.20px;width:491.64px"></div><div class="bf" style="top:356.00px;width:488.14px"></div><div class="bo" style="top:403.24px;width:460.37px"></div><div class="bf" style="top:406.04px;width:456.87px"></div><div class="bo" style="top:453.28px;width:335.11px"></div><div class="bf" style="top:456.08px;width:331.61px"></div><div class="bo" style="top:503.32px;width:283.87px"></div><div class="bf" style="top:506.12px;width:280.37px"></div><div class="bo" style="top:553.36px;width:244.60px"></div><div class="bf" style="top:556.16px;width:241.10px"></div><div class="bo" style="top:603.40px;width:216.04px"></div><div class="bf" style="top:606.20px;width:212.54px"></div><div class="bo" style="top:653.44px;width:207.26px"></div><div class="bf" style="top:656.24px;width:203.76px"></div><div class="bo" style="top:703.48px;width:165.82px"></div><div class="bf" style="top:706.28px;width:162.32px"></div><div class="bo" style="top:753.52px;width:153.04px"></div><div class="bf" style="top:756.32px;width:149.54px"></div><div class="bo" style="top:803.56px;width:145.43px"></div><div class="bf" style="top:806.36px;width:141.93px"></div><div class="bo" style="top:853.60px;width:81.12px"></div><div class="bf" style="top:856.40px;width:77.62px"></div><div class="bo" style="top:903.64px;width:71.55px"></div><div class="bf" style="top:906.44px;width:68.05px"></div><div class="bo" style="top:953.68px;width:70.94px"></div><div class="bf" style="top:956.48px;width:67.44px"></div><div class="bo" style="top:1003.72px;width:70.50px"></div><div class="bf" style="top:1006.52px;width:67.00px"></div><div class="bo" style="top:1053.76px;width:56.54px"></div><div class="bf" style="top:1056.56px;width:53.04px"></div><div class="bo" style="top:1103.80px;width:44.48px"></div><div class="bf" style="top:1106.60px;width:40.98px"></div><div class="bo" style="top:1153.84px;width:43.77px"></div><div class="bf" style="top:1156.64px;width:40.27px"></div><div class="bo" style="top:1203.88px;width:41.85px"></div><div class="bf" style="top:1206.68px;width:38.35px"></div><div class="bo" style="top:1253.92px;width:36.60px"></div><div class="bf" style="top:1256.72px;width:33.10px"></div><div class="bo" style="top:1303.96px;width:35.94px"></div><div class="bf" style="top:1306.76px;width:32.44px"></div><div class="bo" style="top:1354.00px;width:31.83px"></div><div class="bf" style="top:1356.80px;width:28.33px"></div><div class="bo" style="top:1404.04px;width:29.69px"></div><div class="bf" style="top:1406.84px;width:26.19px"></div><div class="bo" style="top:1454.08px;width:22.59px"></div><div class="bf" style="top:1456.88px;width:19.09px"></div><div class="bo" style="top:1504.12px;width:19.07px"></div><div class="bf" style="top:1506.92px;width:15.57px"></div><div class="bo" style="top:1554.16px;width:16.64px"></div><div class="bf" style="top:1556.96px;width:13.14px"></div><div class="bo" style="top:1604.20px;width:16.37px"></div><div class="bf" style="top:1607.00px;width:12.87px"></div><div class="bo" style="top:1654.24px;width:15.23px"></div><div class="bf" style="top:1657.04px;width:11.73px"></div><div class="t" style="left:355.16px;top:-23.23px;font-size:42.16px;line-height:42.16px;color:#ffffff;">January 21, 2020 - April 23, 2022</div><div class="t" style="left:3244.53px;top:4.65px;font-size:32.17px;line-height:32.17px;color:#ffffff;font-weight:700;transform:scaleX(0.9905);-webkit-text-stroke:0.8px #292d40;">Global</div><div class="t" style="left:3516.19px;top:5.30px;font-size:33.77px;line-height:33.77px;color:#ffffff;font-weight:700;transform:scaleX(0.9905);-webkit-text-stroke:0.8px #292d40;">United States</div><div class="t" style="left:1292.87px;top:71.76px;font-size:31.16px;line-height:31.16px;color:#333333;font-weight:700;transform:scaleX(0.9474);-webkit-text-stroke:0.9px #ffffff;">Cumulative or New</div><div class="t" style="left:2043.01px;top:71.76px;font-size:31.16px;line-height:31.16px;color:#333333;font-weight:700;transform:scaleX(0.9351);-webkit-text-stroke:0.9px #ffffff;">Positive Cases or Deaths</div><div class="t" style="left:1304.85px;top:121.07px;font-size:29.86px;line-height:29.86px;color:#333333;transform:scaleX(0.9630);-webkit-text-stroke:0.5px #ffffff;">New</div><div class="t" style="left:2056.40px;top:121.14px;font-size:29.42px;line-height:29.42px;color:#333333;transform:scaleX(0.9549);-webkit-text-stroke:0.5px #ffffff;">Positive Cases</div><div class="t" style="left:565.01px;top:219.84px;font-size:51.30px;line-height:51.30px;color:#3b3b3b;transform:scaleX(0.9362);-webkit-text-stroke:1.1px #ffffff;">New Positive Cases</div><div class="t" style="left:625.14px;top:295.07px;font-size:85.80px;line-height:85.80px;color:#111111;transform:scaleX(1.0152);-webkit-text-stroke:2.2px #ffffff;">631,675</div><div class="t" style="left:636.45px;top:400.69px;font-size:31.30px;line-height:31.30px;color:#474747;transform:scaleX(0.9957);-webkit-text-stroke:0.6px #ffffff;">-13.0% vs previous day</div><div class="t" style="left:723.66px;top:446.48px;font-size:30.14px;line-height:30.14px;color:#474747;transform:scaleX(1.0901);-webkit-text-stroke:0.6px #ffffff;">725,664</div><div class="t" style="left:407.63px;top:503.08px;font-size:30.72px;line-height:30.72px;color:#3a3a3a;transform:scaleX(1.0925);-webkit-text-stroke:0.6px #ffffff;">4M</div><div class="t" style="left:407.63px;top:570.28px;font-size:30.72px;line-height:30.72px;color:#3a3a3a;transform:scaleX(1.0925);-webkit-text-stroke:0.6px #ffffff;">3M</div><div class="t" style="left:407.63px;top:643.38px;font-size:30.72px;line-height:30.72px;color:#3a3a3a;transform:scaleX(1.0925);-webkit-text-stroke:0.6px #ffffff;">2M</div><div class="t" style="left:407.63px;top:715.28px;font-size:30.72px;line-height:30.72px;color:#3a3a3a;transform:scaleX(1.0925);-webkit-text-stroke:0.6px #ffffff;">1M</div><div class="t" style="left:406.38px;top:764.64px;font-size:31.59px;line-height:31.59px;color:#3a3a3a;transform:scaleX(1.0925);-webkit-text-stroke:0.6px #ffffff;">0M</div><div class="t" style="left:468.09px;top:827.69px;font-size:31.30px;line-height:31.30px;color:#3a3a3a;transform:scaleX(0.9704);-webkit-text-stroke:0.6px #ffffff;">Jan 1</div><div class="t" style="left:600.57px;top:827.69px;font-size:31.30px;line-height:31.30px;color:#3a3a3a;transform:scaleX(1.0084);-webkit-text-stroke:0.6px #ffffff;">Jul 1</div><div class="t" style="left:742.89px;top:827.69px;font-size:31.30px;line-height:31.30px;color:#3a3a3a;transform:scaleX(0.9677);-webkit-text-stroke:0.6px #ffffff;">Jan 1</div><div class="t" style="left:895.37px;top:827.69px;font-size:31.30px;line-height:31.30px;color:#3a3a3a;transform:scaleX(1.0069);-webkit-text-stroke:0.6px #ffffff;">Jul 1</div><div class="t" style="left:1040.09px;top:827.69px;font-size:31.30px;line-height:31.30px;color:#3a3a3a;transform:scaleX(0.9744);-webkit-text-stroke:0.6px #ffffff;">Jan 1</div><div class="t" style="left:646.32px;top:1015.41px;font-size:48.99px;line-height:48.99px;color:#3b3b3b;transform:scaleX(1.0027);-webkit-text-stroke:1.1px #ffffff;">New Deaths</div><div class="t" style="left:672.30px;top:1087.85px;font-size:87.83px;line-height:87.83px;color:#111111;transform:scaleX(1.0029);-webkit-text-stroke:2.2px #ffffff;">2,507</div><div class="t" style="left:637.35px;top:1194.69px;font-size:31.30px;line-height:31.30px;color:#474747;transform:scaleX(0.9957);-webkit-text-stroke:0.6px #ffffff;">-16.0% vs previous day</div><div class="t" style="left:742.38px;top:1239.31px;font-size:30.58px;line-height:30.58px;color:#474747;transform:scaleX(1.0625);-webkit-text-stroke:0.6px #ffffff;">2,985</div><div class="t" style="left:397.12px;top:1287.91px;font-size:28.70px;line-height:28.70px;color:#2a2a3a;transform:scaleX(1.1005);-webkit-text-stroke:0.6px #ffffff;">20K</div><div class="t" style="left:394.31px;top:1425.28px;font-size:30.14px;line-height:30.14px;color:#2a2a3a;transform:scaleX(1.1005);-webkit-text-stroke:0.6px #ffffff;">10K</div><div class="t" style="left:413.52px;top:1541.69px;font-size:29.42px;line-height:29.42px;color:#2a2a3a;transform:scaleX(1.1005);-webkit-text-stroke:0.6px #ffffff;">0K</div><div class="t" style="left:468.10px;top:1604.24px;font-size:31.01px;line-height:31.01px;color:#3a3a3a;transform:scaleX(0.9700);-webkit-text-stroke:0.6px #ffffff;">Jan 1</div><div class="t" style="left:600.57px;top:1604.24px;font-size:31.01px;line-height:31.01px;color:#3a3a3a;transform:scaleX(1.0100);-webkit-text-stroke:0.6px #ffffff;">Jul 1</div><div class="t" style="left:743.40px;top:1604.24px;font-size:31.01px;line-height:31.01px;color:#3a3a3a;transform:scaleX(0.9659);-webkit-text-stroke:0.6px #ffffff;">Jan 1</div><div class="t" style="left:895.57px;top:1604.24px;font-size:31.01px;line-height:31.01px;color:#3a3a3a;transform:scaleX(1.0100);-webkit-text-stroke:0.6px #ffffff;">Jul 1</div><div class="t" style="left:1040.39px;top:1604.24px;font-size:31.01px;line-height:31.01px;color:#3a3a3a;transform:scaleX(0.9795);-webkit-text-stroke:0.6px #ffffff;">Jan 1</div><div class="t" style="left:1800.52px;top:221.95px;font-size:51.88px;line-height:51.88px;color:#3b3b3b;transform:scaleX(0.9479);-webkit-text-stroke:1.1px #ffffff;">New Positive Cases</div><div class="t" style="left:1765.12px;top:287.15px;font-size:32.17px;line-height:32.17px;color:#3b3b3b;transform:scaleX(0.9803);-webkit-text-stroke:0.6px #ffffff;">Select a Country to see more details</div><div class="t" style="left:1315.41px;top:1639.69px;font-size:31.30px;line-height:31.30px;color:#555555;transform:scaleX(0.9130);-webkit-text-stroke:0.6px #fafafa;">© 2025 Mapbox</div><div class="t" style="left:1529.71px;top:1639.69px;font-size:31.30px;line-height:31.30px;color:#555555;transform:scaleX(0.9173);-webkit-text-stroke:0.6px #fafafa;">© OpenStreetMap</div><div class="t" style="left:3049.84px;top:222.03px;font-size:50.72px;line-height:50.72px;color:#3b3b3b;transform:scaleX(0.9635);-webkit-text-stroke:1.1px #ffffff;">New Positive Cases</div><div class="t" style="left:3013.93px;top:287.29px;font-size:31.30px;line-height:31.30px;color:#3b3b3b;transform:scaleX(1.0060);-webkit-text-stroke:0.6px #ffffff;">Select a Country to see more details</div><div class="t" style="left:2940.90px;top:357.06px;font-size:30.58px;line-height:30.58px;color:#5a5a5a;transform:scaleX(1.0125);-webkit-text-stroke:0.7px #ffffff;">Germany</div><div class="t" style="left:3582.39px;top:357.66px;font-size:31.16px;line-height:31.16px;color:#111111;transform:scaleX(1.0428);-webkit-text-stroke:0.5px #ffffff;">87,298</div><div class="t" style="left:2873.85px;top:407.10px;font-size:30.58px;line-height:30.58px;color:#5a5a5a;transform:scaleX(1.0643);-webkit-text-stroke:0.7px #ffffff;">United States</div><div class="t" style="left:3551.75px;top:407.70px;font-size:31.16px;line-height:31.16px;color:#111111;transform:scaleX(1.0428);-webkit-text-stroke:0.5px #ffffff;">81,723</div><div class="t" style="left:3010.04px;top:457.14px;font-size:30.58px;line-height:30.58px;color:#5a5a5a;transform:scaleX(1.0384);-webkit-text-stroke:0.7px #ffffff;">Italy</div><div class="t" style="left:3425.86px;top:457.74px;font-size:31.16px;line-height:31.16px;color:#111111;transform:scaleX(1.0428);-webkit-text-stroke:0.5px #ffffff;">59,395</div><div class="t" style="left:2970.67px;top:507.18px;font-size:30.58px;line-height:30.58px;color:#5a5a5a;transform:scaleX(1.0384);-webkit-text-stroke:0.7px #ffffff;">France</div><div class="t" style="left:3374.62px;top:507.78px;font-size:31.16px;line-height:31.16px;color:#111111;transform:scaleX(1.0428);-webkit-text-stroke:0.5px #ffffff;">50,262</div><div class="t" style="left:2884.93px;top:557.22px;font-size:30.58px;line-height:30.58px;color:#5a5a5a;transform:scaleX(1.0384);-webkit-text-stroke:0.7px #ffffff;">Korea, South</div><div class="t" style="left:3336.00px;top:557.82px;font-size:31.16px;line-height:31.16px;color:#111111;transform:scaleX(1.0428);-webkit-text-stroke:0.5px #ffffff;">43,262</div><div class="t" style="left:2944.63px;top:607.26px;font-size:30.58px;line-height:30.58px;color:#5a5a5a;transform:scaleX(1.0384);-webkit-text-stroke:0.7px #ffffff;">Australia</div><div class="t" style="left:3306.80px;top:607.86px;font-size:31.16px;line-height:31.16px;color:#111111;transform:scaleX(1.0428);-webkit-text-stroke:0.5px #ffffff;">38,172</div><div class="t" style="left:2983.69px;top:657.30px;font-size:30.58px;line-height:30.58px;color:#5a5a5a;transform:scaleX(1.0384);-webkit-text-stroke:0.7px #ffffff;">Japan</div><div class="t" style="left:3298.01px;top:657.90px;font-size:31.16px;line-height:31.16px;color:#111111;transform:scaleX(1.0428);-webkit-text-stroke:0.5px #ffffff;">36,606</div><div class="t" style="left:2985.27px;top:707.34px;font-size:30.58px;line-height:30.58px;color:#5a5a5a;transform:scaleX(1.0384);-webkit-text-stroke:0.7px #ffffff;">China</div><div class="t" style="left:3256.24px;top:707.94px;font-size:31.16px;line-height:31.16px;color:#111111;transform:scaleX(1.0428);-webkit-text-stroke:0.5px #ffffff;">29,219</div><div class="t" style="left:2948.44px;top:757.38px;font-size:30.58px;line-height:30.58px;color:#5a5a5a;transform:scaleX(1.0384);-webkit-text-stroke:0.7px #ffffff;">Thailand</div><div class="t" style="left:3243.46px;top:757.98px;font-size:31.16px;line-height:31.16px;color:#111111;transform:scaleX(1.0428);-webkit-text-stroke:0.5px #ffffff;">26,941</div><div class="t" style="left:2951.93px;top:807.42px;font-size:30.58px;line-height:30.58px;color:#5a5a5a;transform:scaleX(1.0384);-webkit-text-stroke:0.7px #ffffff;">Portugal</div><div class="t" style="left:3235.85px;top:808.02px;font-size:31.16px;line-height:31.16px;color:#111111;transform:scaleX(1.0428);-webkit-text-stroke:0.5px #ffffff;">25,584</div><div class="t" style="left:2990.99px;top:857.46px;font-size:30.58px;line-height:30.58px;color:#5a5a5a;transform:scaleX(1.0384);-webkit-text-stroke:0.7px #ffffff;">Brazil</div><div class="t" style="left:3170.58px;top:858.06px;font-size:31.16px;line-height:31.16px;color:#111111;transform:scaleX(1.0428);-webkit-text-stroke:0.5px #ffffff;">14,122</div><div class="t" style="left:2844.29px;top:907.50px;font-size:30.58px;line-height:30.58px;color:#5a5a5a;transform:scaleX(1.0384);-webkit-text-stroke:0.7px #ffffff;">United Kingdom</div><div class="t" style="left:3161.00px;top:908.10px;font-size:31.16px;line-height:31.16px;color:#111111;transform:scaleX(1.0428);-webkit-text-stroke:0.5px #ffffff;">12,415</div><div class="t" style="left:2957.65px;top:957.54px;font-size:30.58px;line-height:30.58px;color:#5a5a5a;transform:scaleX(1.0384);-webkit-text-stroke:0.7px #ffffff;">Taiwan*</div><div class="t" style="left:3160.39px;top:958.14px;font-size:31.16px;line-height:31.16px;color:#111111;transform:scaleX(1.0428);-webkit-text-stroke:0.5px #ffffff;">12,307</div><div class="t" style="left:2957.01px;top:1007.58px;font-size:30.58px;line-height:30.58px;color:#5a5a5a;transform:scaleX(1.0384);-webkit-text-stroke:0.7px #ffffff;">Canada</div><div class="t" style="left:3159.96px;top:1008.18px;font-size:31.16px;line-height:31.16px;color:#111111;transform:scaleX(1.0428);-webkit-text-stroke:0.5px #ffffff;">12,229</div><div class="t" style="left:2968.76px;top:1057.62px;font-size:30.58px;line-height:30.58px;color:#5a5a5a;transform:scaleX(1.0384);-webkit-text-stroke:0.7px #ffffff;">Cyprus</div><div class="t" style="left:3146.96px;top:1058.22px;font-size:31.16px;line-height:31.16px;color:#111111;transform:scaleX(1.0428);-webkit-text-stroke:0.5px #ffffff;">9,739</div><div class="t" style="left:2970.98px;top:1107.66px;font-size:30.58px;line-height:30.58px;color:#5a5a5a;transform:scaleX(1.0384);-webkit-text-stroke:0.7px #ffffff;">Russia</div><div class="t" style="left:3134.91px;top:1108.26px;font-size:31.16px;line-height:31.16px;color:#111111;transform:scaleX(1.0428);-webkit-text-stroke:0.5px #ffffff;">7,590</div><div class="t" style="left:2965.59px;top:1157.70px;font-size:30.58px;line-height:30.58px;color:#5a5a5a;transform:scaleX(1.0384);-webkit-text-stroke:0.7px #ffffff;">Greece</div><div class="t" style="left:3134.19px;top:1158.30px;font-size:31.16px;line-height:31.16px;color:#111111;transform:scaleX(1.0428);-webkit-text-stroke:0.5px #ffffff;">7,463</div><div class="t" style="left:2883.03px;top:1207.74px;font-size:30.58px;line-height:30.58px;color:#5a5a5a;transform:scaleX(1.0384);-webkit-text-stroke:0.7px #ffffff;">New Zealand</div><div class="t" style="left:3132.28px;top:1208.34px;font-size:31.16px;line-height:31.16px;color:#111111;transform:scaleX(1.0428);-webkit-text-stroke:0.5px #ffffff;">7,122</div><div class="t" style="left:2969.40px;top:1257.78px;font-size:30.58px;line-height:30.58px;color:#5a5a5a;transform:scaleX(1.0384);-webkit-text-stroke:0.7px #ffffff;">Austria</div><div class="t" style="left:3127.03px;top:1258.38px;font-size:31.16px;line-height:31.16px;color:#111111;transform:scaleX(1.0428);-webkit-text-stroke:0.5px #ffffff;">6,186</div><div class="t" style="left:2954.47px;top:1307.82px;font-size:30.58px;line-height:30.58px;color:#5a5a5a;transform:scaleX(1.0384);-webkit-text-stroke:0.7px #ffffff;">Vietnam</div><div class="t" style="left:3126.37px;top:1308.42px;font-size:31.16px;line-height:31.16px;color:#111111;transform:scaleX(1.0428);-webkit-text-stroke:0.5px #ffffff;">6,068</div><div class="t" style="left:2924.94px;top:1357.86px;font-size:30.58px;line-height:30.58px;color:#5a5a5a;transform:scaleX(1.0384);-webkit-text-stroke:0.7px #ffffff;">Singapore</div><div class="t" style="left:3122.59px;top:1358.46px;font-size:31.16px;line-height:31.16px;color:#111111;transform:scaleX(1.0428);-webkit-text-stroke:0.5px #ffffff;">5,336</div><div class="t" style="left:2897.00px;top:1407.90px;font-size:30.58px;line-height:30.58px;color:#5a5a5a;transform:scaleX(1.0384);-webkit-text-stroke:0.7px #ffffff;">South Africa</div><div class="t" style="left:3121.09px;top:1408.50px;font-size:31.16px;line-height:31.16px;color:#111111;transform:scaleX(1.0428);-webkit-text-stroke:0.5px #ffffff;">4,954</div><div class="t" style="left:2999.24px;top:1457.94px;font-size:30.58px;line-height:30.58px;color:#5a5a5a;transform:scaleX(1.0384);-webkit-text-stroke:0.7px #ffffff;">India</div><div class="t" style="left:3113.34px;top:1458.54px;font-size:31.16px;line-height:31.16px;color:#111111;transform:scaleX(1.0428);-webkit-text-stroke:0.5px #ffffff;">3,688</div><div class="t" style="left:2931.61px;top:1507.98px;font-size:30.58px;line-height:30.58px;color:#5a5a5a;transform:scaleX(1.0384);-webkit-text-stroke:0.7px #ffffff;">Honduras</div><div class="t" style="left:3109.82px;top:1508.58px;font-size:31.16px;line-height:31.16px;color:#111111;transform:scaleX(1.0428);-webkit-text-stroke:0.5px #ffffff;">3,060</div><div class="t" style="left:2992.58px;top:1558.02px;font-size:30.58px;line-height:30.58px;color:#5a5a5a;transform:scaleX(1.0384);-webkit-text-stroke:0.7px #ffffff;">Israel</div><div class="t" style="left:3107.07px;top:1558.62px;font-size:31.16px;line-height:31.16px;color:#111111;transform:scaleX(1.0428);-webkit-text-stroke:0.5px #ffffff;">2,628</div><div class="t" style="left:2942.72px;top:1608.06px;font-size:30.58px;line-height:30.58px;color:#5a5a5a;transform:scaleX(1.0384);-webkit-text-stroke:0.7px #ffffff;">Malaysia</div><div class="t" style="left:3106.79px;top:1608.66px;font-size:31.16px;line-height:31.16px;color:#111111;transform:scaleX(1.0428);-webkit-text-stroke:0.5px #ffffff;">2,579</div><div class="t" style="left:2997.34px;top:1658.10px;font-size:30.58px;line-height:30.58px;color:#5a5a5a;transform:scaleX(1.0384);-webkit-text-stroke:0.7px #ffffff;">Chile</div><div class="t" style="left:3105.66px;top:1658.70px;font-size:31.16px;line-height:31.16px;color:#111111;transform:scaleX(1.0428);-webkit-text-stroke:0.5px #ffffff;">2,377</div><div class="t" style="left:420.35px;top:1718.54px;font-size:35.07px;line-height:35.07px;color:#666666;font-weight:700;transform:scaleX(0.8665);-webkit-text-stroke:0.7px #f9f9f9;">View on Tableau Public</div><div class="t" style="left:3616.09px;top:1719.77px;font-size:33.62px;line-height:33.62px;color:#666666;font-weight:700;transform:scaleX(0.9500);-webkit-text-stroke:0.7px #f9f9f9;">Share</div></body></html>
